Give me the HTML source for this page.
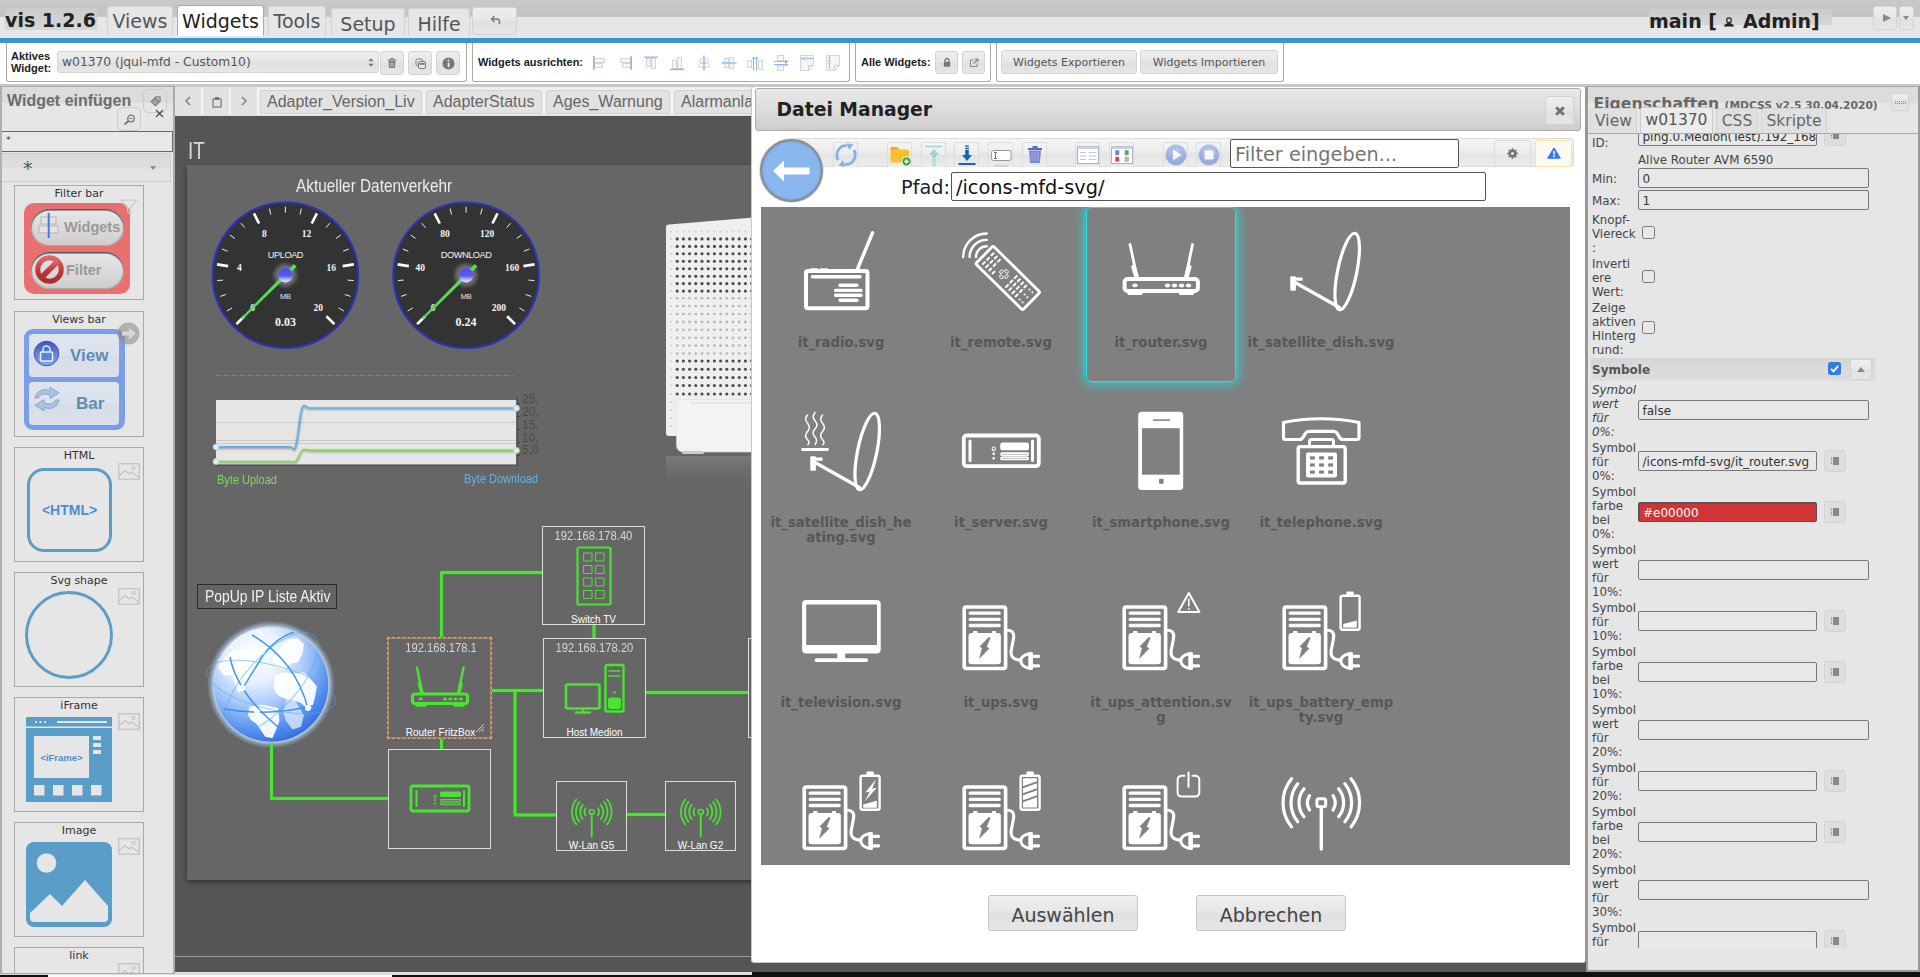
<!DOCTYPE html>
<html lang="de">
<head>
<meta charset="utf-8">
<title>vis 1.2.6</title>
<style>
*{box-sizing:border-box;margin:0;padding:0}
html,body{width:1920px;height:977px;overflow:hidden;background:#fff;font-family:"DejaVu Sans","Liberation Sans",sans-serif;color:#333}
.abs{position:absolute}
#hdr{position:absolute;left:0;top:0;width:1920px;height:38px;background:linear-gradient(#c9c9c9 0,#c3c3c3 15.500px,#a9a9a9 16px,#e6e6e6 17px,#e6e6e6 38px)}
#blue{position:absolute;left:0;top:38px;width:1920px;height:5px;background:#3a93d3}
.tab{position:absolute;border:1px solid #d3d3d3;border-bottom:none;background:#e6e6e6;border-radius:3px 3px 0 0;font-size:19px;color:#555;text-align:center;white-space:nowrap}
.tab.act{background:#fff;color:#212121;border-color:#aaa}
#tool{position:absolute;left:0;top:43px;width:1920px;height:41px;background:#fff}
.grp{position:absolute;top:0;height:39px;border:1px solid #aaa;border-top:none;border-radius:0 0 3px 3px;background:#fff}
.lbl{position:absolute;font-family:"Liberation Sans",sans-serif;font-weight:bold;font-size:11px;color:#222;line-height:12px;white-space:nowrap}
.btn{position:absolute;border:1px solid #d3d3d3;border-radius:3px;background:linear-gradient(#eee 0,#e6e6e6 50%,#e0e0e0 51%,#e6e6e6 100%);color:#555}
.tb{font-size:11px;line-height:23.500px;text-align:center;color:#555;white-space:nowrap}
#sep{position:absolute;left:0;top:84px;width:1920px;height:3px;background:#c8c8c8}




#bot{position:absolute;left:0;top:972px;width:1920px;height:5px;background:#111}

#left{position:absolute;left:0;top:86px;width:175px;height:888px;background:#e6e6e6;border-left:2px solid #b0b0b0;border-right:2px solid #ababab;border-top:1px solid #aaa;border-bottom:1px solid #aaa;overflow:hidden}
#left>*{position:absolute}
#ltitle{left:5px;top:4px;font-family:"Liberation Sans",sans-serif;font-weight:bold;font-size:16px;line-height:20px;color:#6c6c6c;white-space:nowrap}
#lband{left:0;top:0;width:171px;height:16px;background:#dcdcdc}
.lb{width:24px;height:24px;border:1px solid #ccc;border-radius:5px}
#lsearch{left:-1px;top:44px;width:172px;height:21px;border:1px solid #666;background:#e8e8e8;font-size:9.500px;line-height:15px;padding-left:4px;color:#333}
#lsel{left:-1px;top:66px;width:170px;height:29px;border:1px solid #d0d0d0;background:linear-gradient(#dadada 0,#dedede 50%,#e2e2e2 51%,#e5e5e5 100%)}
#lsel span{position:absolute;left:21px;top:0;font-size:19px;line-height:28px;color:#555}
#lsel i{position:absolute;left:148px;top:12px;border-top:4.500px solid #888;border-left:3.800px solid transparent;border-right:3.800px solid transparent}
#ltiles{left:-2px;top:-87px;width:174px;height:1000px}
.wt{position:absolute;left:14px;width:130px;border:1px solid #a8a8a8;background:#e6e6e6}
.wtt{position:absolute;left:0;top:0;width:128px;text-align:center;font-size:11px;line-height:15px;color:#333;white-space:nowrap}
.iph{position:absolute;left:103px;top:15px}
.pill{position:absolute;left:16px;width:93px;height:37px;border-radius:18.500px;background:linear-gradient(#e8e8e8,#cdcdcd);box-shadow:inset 0 1.500px 1px #555,inset 0 0 1px 1px #aaa;overflow:hidden}
.pill span{position:absolute;top:0;line-height:37px;font-family:"Liberation Sans",sans-serif;font-weight:bold;font-size:14.500px;color:#999}
.vbtn{position:absolute;left:14px;width:90px;height:43px;border-radius:4px;background:linear-gradient(#dfe5ee 0,#dce2eb 50%,#d6dde8 51%,#dce2eb 100%)}
.vbtn span{position:absolute;top:0;line-height:43px;font-family:"Liberation Sans",sans-serif;font-weight:bold;font-size:17px;color:#5d8db3}

#mid{position:absolute;left:175px;top:87px;width:1411px;height:885px;background:#555;overflow:hidden}
#vtabs{position:absolute;left:0;top:0;width:1411px;height:29px;background:#efefef;border-bottom:1px solid #ddd}
.vb{position:absolute;top:0;width:27px;height:28px;background:#e2e2e2;border-right:1px solid #f4f4f4}
.vb svg{position:absolute;left:9px;top:9px}
.vt{position:absolute;top:3px;height:24px;border:1px solid #d0d0d0;border-radius:2px;background:#e2e2e2;font-family:"Liberation Sans",sans-serif;font-size:16px;line-height:22px;padding-left:6px;color:#666;white-space:nowrap;overflow:hidden}
#cv{position:absolute;left:0;top:29px;width:576px;height:858px;overflow:hidden}
#cv>*{position:absolute}
.cn{position:absolute;white-space:nowrap;font-family:"Liberation Sans",sans-serif}
.cn span{display:inline-block;transform:scaleX(.84);transform-origin:0 50%}
#cvt{left:13.200px;top:21px;font-family:"Liberation Sans",sans-serif;font-size:23.500px;line-height:28px;color:#ddd;font-weight:normal}
#cvt span{display:inline-block;transform:scaleX(.8);transform-origin:0 50%}
#cvp{left:12px;top:49px;width:600px;height:715px;background:#666;box-shadow:0 2px 5px rgba(0,0,0,.45)}
#popup{left:22px;top:468px;width:140px;height:25px;border:1px solid #2a2a2a;background:#646464}
.nb{position:absolute;border:1px solid #ddd;background:#666}
.nb.selb{border:1px dashed #f5a55a;outline:1px solid rgba(245,165,90,.5);outline-offset:-2px;padding:1px}
.nb.selb>*{margin:1px}
.ip{position:absolute;left:0;top:1px;width:100%;text-align:center;font-family:"Liberation Sans",sans-serif;font-size:12.500px;line-height:16px;color:#d8d8d8;white-space:nowrap}
.ip span{display:inline-block;transform:scaleX(.895)}
.nm{position:absolute;left:0;bottom:-1.500px;width:100%;text-align:center;font-family:"Liberation Sans",sans-serif;font-size:10px;line-height:12px;color:#fff;white-space:nowrap}
#cvline{left:0;top:840px;width:577px;height:1px;background:#999}

#right{position:absolute;left:0;top:0;width:1920px;height:977px;background:none;overflow:visible}
#rbg{position:absolute;left:1586px;top:86px;width:334px;height:886px;background:#e6e6e6;border:2px solid #999;border-top:1px solid #aaa}
#rtitle{position:absolute;left:1593.500px;top:94px;white-space:nowrap;color:#686868;font-size:10.700px;line-height:20px}
#rtitle b{font-size:15.700px}
#rtitle span{font-weight:bold;position:relative;left:2px;top:0}
#rband{position:absolute;left:1588px;top:87px;width:330px;height:16px;background:#dcdcdc}
.rtab{position:absolute;top:108px;height:25px;border:1px solid #d3d3d3;border-bottom:none;border-radius:3px 3px 0 0;background:#e0e0e0;font-size:15.500px;line-height:24px;text-align:center;color:#666;white-space:nowrap}
.rtab.act{background:#ebebeb;color:#555;border-color:#ccc}
#rline{position:absolute;left:1588px;top:133px;width:330px;height:1px;background:#aaa}
#rscroll{position:absolute;left:0;top:134px;width:1920px;height:814px;overflow:hidden}
#rscroll>*{position:absolute;margin-top:-134px}
.pl{left:1592px;width:48px;margin-top:-133px!important;font-size:11.850px;line-height:14px;color:#444;white-space:nowrap}
.pi{left:1638px;height:20px;border:1px solid #777;border-radius:2px;background:#e8e8e8;font-size:12px;line-height:20px;padding-left:3.500px;color:#333;white-space:nowrap;overflow:hidden}
.psb{left:1824px;width:22px;height:22px;background:#dedede}
.psb svg{position:absolute;left:5px;top:5px}
.pcb{left:1642px;width:13px;height:13px;border:1px solid #767676;border-radius:2.500px;background:#e8e8e8}
#symh{left:1591px;top:358px;width:284px;height:23px;background:linear-gradient(#d6d6d6,#dedede)}
#symh b{position:absolute;left:1px;top:1px;line-height:23px;font-size:12px;color:#555}
.pcbb{position:absolute;left:237px;top:4px;width:13px;height:13px;border-radius:2.500px;background:#2f7de1}
.pcbb svg{position:absolute;left:0;top:0}

#dlg{position:absolute;left:0;top:0;width:1920px;height:977px;pointer-events:none}
#dlg>*{position:absolute}
#dbox{position:absolute;left:751px;top:86px;width:835px;height:877px;background:#fff;border:1px solid #c8c8c8;border-right-color:#999;border-radius:3px}
#dtitle{left:755px;top:88px;width:826px;height:43px;border:1px solid #aaa;border-radius:3px;background:linear-gradient(#e9e9e9 0,#e0e0e0 35%,#cecece 100%)}
#dtitle span{position:absolute;left:20.500px;top:0;line-height:42.500px;font-weight:bold;font-size:18.750px;color:#222;white-space:nowrap}
#dclose{left:1544px;top:95px;width:29px;height:29px}
#dclose{left:789px;top:7px}
#dclose svg{position:absolute;left:7.500px;top:8px}
#dtool{left:790px;top:138px;width:784px;height:29px;border:1px solid #ddd;border-radius:3px;background:linear-gradient(#f4f4f4 0,#ececec 50%,#e4e4e4 52%,#ececec 100%)}
.fbtn{top:142px;height:25px;border:1px solid #ddd;border-bottom:none;border-radius:3px 3px 0 0;background:linear-gradient(#f4f4f4 0,#ececec 50%,#e4e4e4 52%,#ececec 100%);overflow:hidden}
.fbtn svg{position:absolute;left:0;top:0}
#back{left:760px;top:139px;width:63px;height:63px;border-radius:50%;background:#8ab6ee;border:2px solid #8c8c8c;box-shadow:0 0 0 1px #e0e0e0,inset 0 0 2px 0 #4f82d4}
#back svg{position:absolute;left:10px;top:18px}
#filter{left:1230px;top:139px;width:229px;height:29px;border:1px solid #555;border-radius:2px;background:#fff;font-size:19.300px;line-height:29px;padding-left:4px;color:#757575;white-space:nowrap;overflow:hidden}
#pfl{left:901px;top:173px;font-size:19.300px;line-height:29px;color:#222}
#pfad{left:951px;top:172px;width:535px;height:29px;border:1px solid #555;border-radius:2px;background:#fff;font-size:19.300px;line-height:29px;padding-left:4px;color:#111;white-space:nowrap}
#files{left:761px;top:207px;width:809px;height:658px;background:#808080;overflow:hidden}
.tile{position:absolute;width:150px;height:174px;border:1px solid transparent;border-radius:5px}
.tile.sel{border-color:#19e6e6;box-shadow:0 0 12px 1px #22dede;margin-top:-1px;height:175px}
.tile.sel .ico{top:22px}
.tile.sel .fn{top:127px}
.ico{position:absolute;left:34px;top:21px;overflow:visible}
.fn{position:absolute;left:-3px;top:126px;width:154px;text-align:center;font-weight:bold;font-size:13.200px;line-height:15px;color:#575757;white-space:nowrap}
.dbt{top:895px;width:150px;height:36px;font-size:19px;line-height:38.500px;text-align:center;color:#444;border-color:#c5c5c5}
</style>
</head>
<body>
<div id="hdr">
<div class="abs" style="left:5px;top:8px;width:92px;height:22px;background:linear-gradient(#cbcbcb,#d6d6d6)"></div>
<div class="abs" id="vis" style="left:5px;top:6px;font-weight:bold;font-size:19px;line-height:28px;color:#222;white-space:nowrap">vis 1.2.6</div>
<div class="tab" style="left:107px;top:6px;width:66px;height:30px;line-height:28px">Views</div>
<div class="tab act" style="left:177px;top:5px;width:87px;height:31px;line-height:30px;border-bottom:1px solid #fff">Widgets</div>
<div class="tab" style="left:268px;top:6px;width:58px;height:30px;line-height:28px">Tools</div>
<div class="tab" style="left:331px;top:8px;width:74px;height:28px;line-height:30px">Setup</div>
<div class="tab" style="left:408px;top:8px;width:62px;height:28px;line-height:30px">Hilfe</div>
<div class="btn" style="left:472px;top:7px;width:45px;height:28px"><svg class="abs" style="left:17px;top:7px" width="11" height="11" viewBox="0 0 11 11"><path d="M4.5 1 L1.5 4 L4.5 7 M1.5 4 H7 Q9.5 4 9.5 7 V9" fill="none" stroke="#777" stroke-width="1.4"/></svg></div>
<div class="abs" style="left:1649px;top:9px;width:183px;height:16px;background:linear-gradient(#cbcbcb,#d6d6d6)"></div>
<div class="abs" id="main" style="left:1649px;top:7px;font-weight:bold;font-size:19px;line-height:28px;color:#222;white-space:nowrap">main [<svg width="12" height="12" viewBox="0 0 12 12" style="margin:0 8px 0 6px;vertical-align:0px"><circle cx="6" cy="4.2" r="2.3" fill="none" stroke="#222" stroke-width="1.1"/><path d="M0.8 10.5 Q2 7 6 7 Q10 7 11.2 10.5 Z" fill="#222"/></svg>Admin]</div>
<div class="btn" style="left:1873px;top:6px;width:24px;height:24px"><div class="abs" style="left:9px;top:7px;border-left:8px solid #888;border-top:4.5px solid transparent;border-bottom:4.5px solid transparent"></div></div>
<div class="btn" style="left:1899px;top:6px;width:15px;height:24px"><div class="abs" style="left:3px;top:9px;border-top:4px solid #888;border-left:3.5px solid transparent;border-right:3.5px solid transparent"></div></div>
</div>
<div id="blue"></div>
<div id="tool">
<div class="grp" style="left:6px;width:461px">
<div class="lbl" style="left:4px;top:7px">Aktives<br>Widget:</div>
<div class="btn" style="left:49.500px;top:8px;width:322px;height:22px;font-size:12.300px;line-height:21px;padding-left:4.500px;color:#555;white-space:nowrap">w01370 (jqui-mfd - Custom10)<svg class="abs" style="left:309px;top:5px" width="8" height="11" viewBox="0 0 8 11"><path d="M1.300 4.300L4 1.300L6.700 4.300zM1.300 6.700L4 9.700L6.700 6.700z" fill="#777"/></svg></div>
<div class="btn" style="left:372.500px;top:8px;width:24px;height:24px"><svg class="abs" style="left:5px;top:5px" width="12" height="12" viewBox="0 0 12 12"><path d="M1.500 3h9M4.500 3v-1.300h3v1.300" stroke="#777" stroke-width="1.100" fill="none"/><path d="M2.500 4h7l-.7 7h-5.600z" fill="#777"/><path d="M4.700 5.200v4.600M6 5.200v4.600M7.300 5.200v4.600" stroke="#e6e6e6" stroke-width=".6"/></svg></div>
<div class="btn" style="left:400.500px;top:8px;width:24px;height:24px"><svg class="abs" style="left:5px;top:5px" width="13" height="13" viewBox="0 0 13 13"><rect x="2" y="2" width="6.500" height="6.500" rx="1.500" fill="none" stroke="#777" stroke-width="1"/><rect x="4.500" y="4.500" width="7" height="7" rx="1.500" fill="#e8e8e8" stroke="#777" stroke-width="1"/><rect x="5.500" y="6" width="5" height="1.800" fill="#777"/></svg></div>
<div class="btn" style="left:428.500px;top:8px;width:24px;height:24px"><svg class="abs" style="left:5px;top:4.500px" width="13" height="13" viewBox="0 0 13 13"><circle cx="6.500" cy="6.500" r="6" fill="#777"/><rect x="5.700" y="5.600" width="1.700" height="4.500" fill="#eee"/><circle cx="6.500" cy="3.600" r="1" fill="#eee"/></svg></div>
</div>
<div class="grp" style="left:472px;width:378px">
<div class="lbl" style="left:5px;top:13px">Widgets ausrichten:</div>
<div class="abs" style="left:118px;top:11px;width:18px;height:18px"><svg width="18" height="18" viewBox="0 0 18 18" opacity="0.55"><rect x="3.5" y="4.5" width="10" height="4" fill="#eee" stroke="#b4b4b4" stroke-width="1"/><rect x="3.5" y="9.5" width="8" height="4" fill="#eee" stroke="#b4b4b4" stroke-width="1"/><rect x="2" y="2" width="1.6" height="14" fill="#3b7de0"/></svg></div><div class="abs" style="left:143px;top:11px;width:18px;height:18px"><svg width="18" height="18" viewBox="0 0 18 18" opacity="0.55"><rect x="4.5" y="4.5" width="10" height="4" fill="#eee" stroke="#b4b4b4" stroke-width="1"/><rect x="6.5" y="9.5" width="8" height="4" fill="#eee" stroke="#b4b4b4" stroke-width="1"/><rect x="14.4" y="2" width="1.6" height="14" fill="#3b7de0"/></svg></div><div class="abs" style="left:169px;top:11px;width:18px;height:18px"><svg width="18" height="18" viewBox="0 0 18 18" opacity="0.55"><rect x="4.5" y="4.5" width="4" height="8" fill="#eee" stroke="#b4b4b4" stroke-width="1"/><rect x="9.500" y="4.5" width="4" height="10" fill="#eee" stroke="#b4b4b4" stroke-width="1"/><rect x="2" y="2.5" width="14" height="1.4" fill="#3b7de0"/></svg></div><div class="abs" style="left:195px;top:11px;width:18px;height:18px"><svg width="18" height="18" viewBox="0 0 18 18" opacity="0.55"><rect x="4.5" y="6.5" width="4" height="8" fill="#eee" stroke="#b4b4b4" stroke-width="1"/><rect x="9.5" y="3.5" width="4" height="11" fill="#eee" stroke="#b4b4b4" stroke-width="1"/><rect x="2" y="14.6" width="14" height="1.6" fill="#3b7de0"/></svg></div><div class="abs" style="left:221.5px;top:11px;width:18px;height:18px"><svg width="18" height="18" viewBox="0 0 18 18" opacity="0.55"><rect x="4.500" y="4.500" width="9" height="4" rx="2" fill="#eee" stroke="#b4b4b4" stroke-width="1"/><rect x="3.5" y="9.5" width="11" height="4" rx="2" fill="#eee" stroke="#b4b4b4" stroke-width="1"/><rect x="8.3" y="1.5" width="1.4" height="15" fill="#3b7de0"/></svg></div><div class="abs" style="left:247px;top:11px;width:18px;height:18px"><svg width="18" height="18" viewBox="0 0 18 18" opacity="0.55"><rect x="4.5" y="4.5" width="4" height="9" fill="#eee" stroke="#b4b4b4" stroke-width="1"/><rect x="9.5" y="3.500" width="4" height="11" fill="#eee" stroke="#b4b4b4" stroke-width="1"/><rect x="1.5" y="8.3" width="15" height="1.4" fill="#3b7de0"/></svg></div><div class="abs" style="left:273px;top:11px;width:18px;height:18px"><svg width="18" height="18" viewBox="0 0 18 18" opacity="0.55"><rect x="1.5" y="6.5" width="4" height="7" fill="#eee" stroke="#b4b4b4" stroke-width="1"/><rect x="12.5" y="6.5" width="4" height="9" fill="#eee" stroke="#b4b4b4" stroke-width="1"/><path d="M7.5 3v13.500M10.5 3v13.500M6 4.500h3M9 4.500h3" stroke="#3b7de0" stroke-width="1.1" fill="none"/></svg></div><div class="abs" style="left:299px;top:11px;width:18px;height:18px"><svg width="18" height="18" viewBox="0 0 18 18" opacity="0.55"><rect x="5.500" y="1.500" width="6" height="5" fill="#eee" stroke="#b4b4b4" stroke-width="1"/><rect x="5.500" y="11.500" width="6" height="5" fill="#eee" stroke="#b4b4b4" stroke-width="1"/><path d="M2 7.500h13M2 10.500h13M13 6l2.500 1.500l-2.500 1.500M13 9l2.500 1.500l-2.500 1.500" stroke="#3b7de0" stroke-width="1.2" fill="none"/></svg></div><div class="abs" style="left:325px;top:11px;width:18px;height:18px"><svg width="18" height="18" viewBox="0 0 18 18" opacity="0.55"><path d="M2.500 1.500h13v10l-5 5h-8z" fill="#eee" stroke="#b4b4b4" stroke-width="1"/><path d="M10.500 16.500v-5h5" fill="none" stroke="#aaa"/><path d="M4 4.500h10M4 3.500v2M14 3.500v2" stroke="#3b7de0" stroke-width="1" fill="none"/><rect x="7.500" y="3.500" width="2" height="2" fill="#fff" stroke="#888" stroke-width=".6"/></svg></div><div class="abs" style="left:351px;top:11px;width:18px;height:18px"><svg width="18" height="18" viewBox="0 0 18 18" opacity="0.55"><path d="M2.500 1.500h13v10l-5 5h-8z" fill="#eee" stroke="#b4b4b4" stroke-width="1"/><path d="M10.500 16.500v-5h5" fill="none" stroke="#aaa"/><path d="M5.500 3v11M4.500 3h2M4.500 14h2" stroke="#3b7de0" stroke-width="1" fill="none"/><rect x="4.500" y="7.500" width="2" height="2" fill="#fff" stroke="#888" stroke-width=".6"/></svg></div>
</div>
<div class="grp" style="left:855px;width:136px">
<div class="lbl" style="left:5px;top:13px">Alle Widgets:</div>
<div class="btn" style="left:79px;top:8px;width:23px;height:23px"><svg class="abs" style="left:6px;top:5px" width="10" height="11" viewBox="0 0 10 11"><path d="M3 5V3.500a2 2 0 0 1 4 0V5" fill="none" stroke="#777" stroke-width="1.300"/><rect x="1.800" y="4.800" width="6.400" height="5" rx="1" fill="#777"/></svg></div>
<div class="btn" style="left:106px;top:8px;width:23px;height:23px"><svg class="abs" style="left:6px;top:6px" width="10" height="10" viewBox="0 0 10 10"><path d="M4.500 2H1.500v6.500H8V5.500" fill="none" stroke="#888" stroke-width="1"/><path d="M5.500 1H9v3.500M9 1L4.500 5.500" fill="none" stroke="#888" stroke-width="1.100"/></svg></div>
</div>
<div class="grp" style="left:996px;width:288px">
<div class="btn tb" style="left:4px;top:7px;width:136px;height:24px">Widgets Exportieren</div>
<div class="btn tb" style="left:143px;top:7px;width:138px;height:24px">Widgets Importieren</div>
</div>
</div>

<div id="sep"></div>


<div id="rbg"></div>

<div id="bot"><div class="abs" style="left:0;top:0;width:752px;height:3px;background:#dcdcdc"></div><div class="abs" style="left:0;top:3px;width:752px;height:2px;background:#111"></div><div class="abs" style="left:48px;top:3px;width:344px;height:2px;background:#f8f8f8"></div></div>

<div id="left">
<div id="lband"></div>
<div id="ltitle">Widget einfügen</div>
<div class="lb" style="left:141px;top:2px"><svg class="abs" style="left:5px;top:5px" width="13" height="13" viewBox="0 0 13 13"><path d="M6.500 1.200H11.800V6.500L6.500 11.800L1.200 6.500Z" fill="#8a8a8a"/><circle cx="9.300" cy="3.700" r="1" fill="#e6e6e6"/><path d="M4 6.500L6.500 9M5.500 5L8 7.500" stroke="#e6e6e6" stroke-width=".8"/></svg></div>
<div class="lb" style="left:115px;top:20px"><svg class="abs" style="left:5px;top:6px" width="13" height="12" viewBox="0 0 13 12"><circle cx="8" cy="4.500" r="3.300" fill="none" stroke="#777" stroke-width="1.300"/><path d="M6.300 4.500h3.400" stroke="#777" stroke-width="1"/><path d="M5.500 7L1.500 10.500" stroke="#777" stroke-width="2"/></svg></div>
<svg class="abs" style="left:153px;top:22px" width="9" height="9" viewBox="0 0 9 9"><path d="M1 1L8 8M8 1L1 8" stroke="#444" stroke-width="1.100"/></svg>
<div id="lsearch">*</div>
<div id="lsel"><span>*</span><i></i></div>
<div id="ltiles"><div class="wt" style="top:185px;height:115px"><div class="wtt">Filter bar</div><div class="abs" style="left:9px;top:17px;width:106px;height:91px;border-radius:10px;background:#e87070"></div><div class="pill" style="top:23px"><svg class="abs" style="left:7px;top:3px" width="22" height="28" viewBox="0 0 22 28"><rect x="3" y="5" width="15" height="7" fill="#e4e4e4" stroke="#b5b5b5"/><rect x="1" y="14" width="19" height="7" fill="#e4e4e4" stroke="#b5b5b5"/><rect x="9.700" y="1" width="2" height="25" fill="#3b7de0"/></svg><span style="left:33px">Widgets</span></div><div class="pill" style="top:66px"><svg class="abs" style="left:3px;top:2px" width="31" height="31" viewBox="0 0 31 31"><defs><linearGradient id="ng" x1="0" y1="0" x2="0" y2="1"><stop offset="0" stop-color="#d96a6a"/><stop offset=".5" stop-color="#c43a3a"/><stop offset="1" stop-color="#a83030"/></linearGradient></defs><circle cx="15.500" cy="15.500" r="11.800" fill="none" stroke="url(#ng)" stroke-width="5"/><path d="M7.500 23.500L23.500 7.500" stroke="url(#ng)" stroke-width="5.500"/></svg><span style="left:35px">Filter</span></div><svg class="abs" style="left:105px;top:13px" width="18" height="17" viewBox="0 0 18 17"><path d="M1 1.200H16.500L10.500 8.500V15L7.500 13V8.500Z" fill="none" stroke="#ccc" stroke-width="1.200"/></svg></div>
<div class="wt" style="top:311px;height:126px"><div class="wtt">Views bar</div><div class="abs" style="left:9px;top:17px;width:101px;height:101px;border-radius:9px;background:#7b9fe6"></div><div class="vbtn" style="top:22px"><svg class="abs" style="left:4px;top:6px" width="27" height="27" viewBox="0 0 27 27"><defs><linearGradient id="lg1" x1="0" y1="0" x2="0" y2="1"><stop offset="0" stop-color="#3b57c4"/><stop offset="1" stop-color="#86abf0"/></linearGradient></defs><circle cx="13.500" cy="13.500" r="12.300" fill="url(#lg1)" stroke="#4a50b0" stroke-width="1"/><rect x="7.500" y="12" width="12" height="9" rx="1" fill="#5a84dc" stroke="#e8eefc" stroke-width="1.500"/><path d="M10 12V9.500a3.500 3.500 0 0 1 7 0V12" fill="none" stroke="#e8eefc" stroke-width="1.500"/></svg><span style="left:41px">View</span></div><div class="vbtn" style="top:70px"><svg class="abs" style="left:4px;top:3px" width="28" height="30" viewBox="0 0 28 30"><path d="M2 13C3 6 10 3 17 5.500V2L26 8L17 13.500V10C11 8 6 10 5.500 13ZM26 15C25 22 18 25 11 22.500V26L2 20L11 14.500V18C17 20 22 18 22.500 15Z" fill="#a9c3e0" stroke="#7d9dc4" stroke-width=".8"/></svg><span style="left:47px">Bar</span></div><svg class="abs" style="left:102px;top:10px" width="23" height="23" viewBox="0 0 23 23"><circle cx="11.500" cy="11.500" r="11" fill="rgba(140,140,140,.6)"/><path d="M5 9.500H12V5.500L19 11.500L12 17.500V13.500H5Z" fill="#d8d8d8"/></svg></div>
<div class="wt" style="top:447px;height:115px"><div class="wtt">HTML</div><svg class="iph" width="22" height="17" viewBox="0 0 22 17"><rect x=".750" y=".750" width="20.500" height="15.500" fill="none" stroke="#c4c4c4" stroke-width="1.300"/><path d="M.750 13L7 7.500L11 11L13.500 9L21.250 14.500" fill="none" stroke="#c4c4c4" stroke-width="1.300"/><circle cx="15.500" cy="5" r="1.500" fill="none" stroke="#c4c4c4" stroke-width="1.200"/></svg><div class="abs" style="left:12px;top:20px;width:85px;height:84px;border:3px solid #5b9dc9;border-radius:17px;text-align:center;line-height:78px;font-family:'Liberation Sans',sans-serif;font-weight:bold;font-size:14px;color:#4a8fd0">&lt;HTML&gt;</div></div>
<div class="wt" style="top:572px;height:115px"><div class="wtt">Svg shape</div><svg class="iph" width="22" height="17" viewBox="0 0 22 17"><rect x=".750" y=".750" width="20.500" height="15.500" fill="none" stroke="#c4c4c4" stroke-width="1.300"/><path d="M.750 13L7 7.500L11 11L13.500 9L21.250 14.500" fill="none" stroke="#c4c4c4" stroke-width="1.300"/><circle cx="15.500" cy="5" r="1.500" fill="none" stroke="#c4c4c4" stroke-width="1.200"/></svg><div class="abs" style="left:10px;top:18px;width:88px;height:88px;border:3.300px solid #5b9dc9;border-radius:50%"></div></div>
<div class="wt" style="top:697px;height:115px"><div class="wtt">iFrame</div><svg class="iph" width="22" height="17" viewBox="0 0 22 17"><rect x=".750" y=".750" width="20.500" height="15.500" fill="none" stroke="#c4c4c4" stroke-width="1.300"/><path d="M.750 13L7 7.500L11 11L13.500 9L21.250 14.500" fill="none" stroke="#c4c4c4" stroke-width="1.300"/><circle cx="15.500" cy="5" r="1.500" fill="none" stroke="#c4c4c4" stroke-width="1.200"/></svg><svg class="abs" style="left:11.300px;top:19.400px" width="86" height="85" viewBox="0 0 86 85"><rect width="86" height="85" fill="#5b9dc9"/><rect x="0" y="9.500" width="86" height="1.500" fill="#e6e6e6"/><path d="M9 5h2M13.500 5h2M18 5h2" stroke="#e6e6e6" stroke-width="1.800"/><rect x="31" y="4" width="50" height="2" fill="#e6e6e6"/><rect x="8" y="19" width="55" height="42" fill="#e6e6e6"/><rect x="67" y="19" width="8" height="4" fill="#e6e6e6"/><rect x="67" y="26" width="8" height="4" fill="#e6e6e6"/><rect x="67" y="33" width="8" height="4" fill="#e6e6e6"/><rect x="8" y="68" width="10.500" height="10.500" fill="#e6e6e6"/><rect x="27" y="68" width="10.500" height="10.500" fill="#e6e6e6"/><rect x="46" y="68" width="10.500" height="10.500" fill="#e6e6e6"/><rect x="65" y="68" width="10.500" height="10.500" fill="#e6e6e6"/><text x="35.500" y="43.500" text-anchor="middle" font-family="Liberation Sans,sans-serif" font-weight="bold" font-size="9.500" fill="#4a8fd0">&lt;iFrame&gt;</text></svg></div>
<div class="wt" style="top:822px;height:115px"><div class="wtt">Image</div><svg class="iph" width="22" height="17" viewBox="0 0 22 17"><rect x=".750" y=".750" width="20.500" height="15.500" fill="none" stroke="#c4c4c4" stroke-width="1.300"/><path d="M.750 13L7 7.500L11 11L13.500 9L21.250 14.500" fill="none" stroke="#c4c4c4" stroke-width="1.300"/><circle cx="15.500" cy="5" r="1.500" fill="none" stroke="#c4c4c4" stroke-width="1.200"/></svg><svg class="abs" style="left:11.300px;top:19.400px" width="86" height="85" viewBox="0 0 86 85"><rect width="86" height="85" rx="8" fill="#5b9dc9"/><circle cx="20.500" cy="21" r="9.800" fill="#e6e6e6"/><path d="M4 71L24 52L36 64L59 38L82 64V76a4 4 0 0 1 -4 4H8a4 4 0 0 1 -4 -4Z" fill="#e6e6e6"/></svg></div>
<div class="wt" style="top:947px;height:40px"><div class="wtt">link</div><svg class="iph" width="22" height="17" viewBox="0 0 22 17"><rect x=".750" y=".750" width="20.500" height="15.500" fill="none" stroke="#c4c4c4" stroke-width="1.300"/><path d="M.750 13L7 7.500L11 11L13.500 9L21.250 14.500" fill="none" stroke="#c4c4c4" stroke-width="1.300"/><circle cx="15.500" cy="5" r="1.500" fill="none" stroke="#c4c4c4" stroke-width="1.200"/></svg></div>
</div>
</div>
<div id="mid">
<div id="vtabs"><div class="vb" style="left:0"><svg width="8" height="10" viewBox="0 0 8 10"><path d="M6 1L2 5L6 9" fill="none" stroke="#777" stroke-width="1.300"/></svg></div><div class="vb" style="left:28px"><svg width="10" height="12" viewBox="0 0 10 12"><rect x="1" y="3" width="8" height="8" fill="none" stroke="#777" stroke-width="1.200"/><rect x="3" y="1" width="4" height="3" fill="#777"/></svg></div><div class="vb" style="left:56px"><svg width="8" height="10" viewBox="0 0 8 10"><path d="M2 1L6 5L2 9" fill="none" stroke="#777" stroke-width="1.300"/></svg></div><div class="vt" style="left:85px;width:162px">Adapter_Version_Liv</div><div class="vt" style="left:251px;width:116px">AdapterStatus</div><div class="vt" style="left:371px;width:124px">Ages_Warnung</div><div class="vt" style="left:499px;width:120px">Alarmanlage</div></div>
<div id="cv">
<div id="cvt"><span>IT</span></div>
<div id="cvp"></div>
<div class="cn" style="left:121px;top:59px;font-size:18.300px;color:#ececec"><span>Aktueller Datenverkehr</span></div>
<svg class="abs" style="left:-175px;top:-116px" width="760" height="600" viewBox="0 0 760 600"><defs><linearGradient id="hub" x1="0" y1="0" x2="0" y2="1"><stop offset="0" stop-color="#4d4de6"/><stop offset=".55" stop-color="#5a5af0"/><stop offset=".8" stop-color="#b9b9ff"/><stop offset="1" stop-color="#f0f0ff"/></linearGradient><radialGradient id="hubglow"><stop offset=".4" stop-color="#d8c8d0" stop-opacity=".55"/><stop offset="1" stop-color="#d8c8d0" stop-opacity="0"/></radialGradient></defs><g transform="translate(285.4 275.2)"><circle r="72.8" fill="#333" stroke="#2c32bc" stroke-width="2"/><line x1="-41.01" y1="41.01" x2="-49.00" y2="49.00" stroke="#fff" stroke-width="2.600"/><line x1="-53.29" y1="32.66" x2="-58.41" y2="35.79" stroke="#eee" stroke-width="1"/><line x1="-59.44" y1="19.31" x2="-65.15" y2="21.17" stroke="#eee" stroke-width="1"/><line x1="-62.31" y1="4.90" x2="-68.29" y2="5.37" stroke="#eee" stroke-width="1"/><line x1="-57.29" y1="-9.07" x2="-68.45" y2="-10.84" stroke="#fff" stroke-width="2.600"/><line x1="-57.74" y1="-23.92" x2="-63.29" y2="-26.21" stroke="#eee" stroke-width="1"/><line x1="-50.56" y1="-36.74" x2="-55.42" y2="-40.26" stroke="#eee" stroke-width="1"/><line x1="-40.59" y1="-47.53" x2="-44.49" y2="-52.09" stroke="#eee" stroke-width="1"/><line x1="-26.33" y1="-51.68" x2="-31.46" y2="-61.75" stroke="#fff" stroke-width="2.600"/><line x1="-14.59" y1="-60.77" x2="-15.99" y2="-66.61" stroke="#eee" stroke-width="1"/><line x1="-0.00" y1="-62.50" x2="-0.00" y2="-68.50" stroke="#eee" stroke-width="1"/><line x1="14.59" y1="-60.77" x2="15.99" y2="-66.61" stroke="#eee" stroke-width="1"/><line x1="26.33" y1="-51.68" x2="31.46" y2="-61.75" stroke="#fff" stroke-width="2.600"/><line x1="40.59" y1="-47.53" x2="44.49" y2="-52.09" stroke="#eee" stroke-width="1"/><line x1="50.56" y1="-36.74" x2="55.42" y2="-40.26" stroke="#eee" stroke-width="1"/><line x1="57.74" y1="-23.92" x2="63.29" y2="-26.21" stroke="#eee" stroke-width="1"/><line x1="57.29" y1="-9.07" x2="68.45" y2="-10.84" stroke="#fff" stroke-width="2.600"/><line x1="62.31" y1="4.90" x2="68.29" y2="5.37" stroke="#eee" stroke-width="1"/><line x1="59.44" y1="19.31" x2="65.15" y2="21.17" stroke="#eee" stroke-width="1"/><line x1="53.29" y1="32.66" x2="58.41" y2="35.79" stroke="#eee" stroke-width="1"/><line x1="41.01" y1="41.01" x2="49.00" y2="49.00" stroke="#fff" stroke-width="2.600"/><text x="-32.88" y="35.88" text-anchor="middle" font-family="Liberation Serif,serif" font-weight="bold" font-size="9.500" fill="#f4f4f4">0</text><text x="-45.93" y="-4.27" text-anchor="middle" font-family="Liberation Serif,serif" font-weight="bold" font-size="9.500" fill="#f4f4f4">4</text><text x="-21.11" y="-38.43" text-anchor="middle" font-family="Liberation Serif,serif" font-weight="bold" font-size="9.500" fill="#f4f4f4">8</text><text x="21.11" y="-38.43" text-anchor="middle" font-family="Liberation Serif,serif" font-weight="bold" font-size="9.500" fill="#f4f4f4">12</text><text x="45.93" y="-4.27" text-anchor="middle" font-family="Liberation Serif,serif" font-weight="bold" font-size="9.500" fill="#f4f4f4">16</text><text x="32.88" y="35.88" text-anchor="middle" font-family="Liberation Serif,serif" font-weight="bold" font-size="9.500" fill="#f4f4f4">20</text><text x="0" y="-17.500" text-anchor="middle" font-family="Liberation Sans,sans-serif" font-size="9.200" fill="#f4f4f4" letter-spacing="-.4">UPLOAD</text><text x="0" y="23.500" text-anchor="middle" font-family="Liberation Sans,sans-serif" font-size="7.500" fill="#e8e8e8" letter-spacing="-.3">MB</text><text x="0" y="51" text-anchor="middle" font-family="Liberation Serif,serif" font-weight="bold" font-size="12" fill="#f4f4f4">0.03</text><circle r="14" fill="url(#hubglow)"/><g transform="rotate(225)"><path d="M-2 14L-1 -62L1 -62L2 14Z" fill="#55dd55"/><path d="M-1 -62L-.8 -68.500L.8 -68.500L1 -62Z" fill="#fff"/></g><circle r="7.300" fill="url(#hub)"/></g><g transform="translate(466.1 275.2)"><circle r="72.8" fill="#333" stroke="#2c32bc" stroke-width="2"/><line x1="-41.01" y1="41.01" x2="-49.00" y2="49.00" stroke="#fff" stroke-width="2.600"/><line x1="-53.29" y1="32.66" x2="-58.41" y2="35.79" stroke="#eee" stroke-width="1"/><line x1="-59.44" y1="19.31" x2="-65.15" y2="21.17" stroke="#eee" stroke-width="1"/><line x1="-62.31" y1="4.90" x2="-68.29" y2="5.37" stroke="#eee" stroke-width="1"/><line x1="-57.29" y1="-9.07" x2="-68.45" y2="-10.84" stroke="#fff" stroke-width="2.600"/><line x1="-57.74" y1="-23.92" x2="-63.29" y2="-26.21" stroke="#eee" stroke-width="1"/><line x1="-50.56" y1="-36.74" x2="-55.42" y2="-40.26" stroke="#eee" stroke-width="1"/><line x1="-40.59" y1="-47.53" x2="-44.49" y2="-52.09" stroke="#eee" stroke-width="1"/><line x1="-26.33" y1="-51.68" x2="-31.46" y2="-61.75" stroke="#fff" stroke-width="2.600"/><line x1="-14.59" y1="-60.77" x2="-15.99" y2="-66.61" stroke="#eee" stroke-width="1"/><line x1="-0.00" y1="-62.50" x2="-0.00" y2="-68.50" stroke="#eee" stroke-width="1"/><line x1="14.59" y1="-60.77" x2="15.99" y2="-66.61" stroke="#eee" stroke-width="1"/><line x1="26.33" y1="-51.68" x2="31.46" y2="-61.75" stroke="#fff" stroke-width="2.600"/><line x1="40.59" y1="-47.53" x2="44.49" y2="-52.09" stroke="#eee" stroke-width="1"/><line x1="50.56" y1="-36.74" x2="55.42" y2="-40.26" stroke="#eee" stroke-width="1"/><line x1="57.74" y1="-23.92" x2="63.29" y2="-26.21" stroke="#eee" stroke-width="1"/><line x1="57.29" y1="-9.07" x2="68.45" y2="-10.84" stroke="#fff" stroke-width="2.600"/><line x1="62.31" y1="4.90" x2="68.29" y2="5.37" stroke="#eee" stroke-width="1"/><line x1="59.44" y1="19.31" x2="65.15" y2="21.17" stroke="#eee" stroke-width="1"/><line x1="53.29" y1="32.66" x2="58.41" y2="35.79" stroke="#eee" stroke-width="1"/><line x1="41.01" y1="41.01" x2="49.00" y2="49.00" stroke="#fff" stroke-width="2.600"/><text x="-32.88" y="35.88" text-anchor="middle" font-family="Liberation Serif,serif" font-weight="bold" font-size="9.500" fill="#f4f4f4">0</text><text x="-45.93" y="-4.27" text-anchor="middle" font-family="Liberation Serif,serif" font-weight="bold" font-size="9.500" fill="#f4f4f4">40</text><text x="-21.11" y="-38.43" text-anchor="middle" font-family="Liberation Serif,serif" font-weight="bold" font-size="9.500" fill="#f4f4f4">80</text><text x="21.11" y="-38.43" text-anchor="middle" font-family="Liberation Serif,serif" font-weight="bold" font-size="9.500" fill="#f4f4f4">120</text><text x="45.93" y="-4.27" text-anchor="middle" font-family="Liberation Serif,serif" font-weight="bold" font-size="9.500" fill="#f4f4f4">160</text><text x="32.88" y="35.88" text-anchor="middle" font-family="Liberation Serif,serif" font-weight="bold" font-size="9.500" fill="#f4f4f4">200</text><text x="0" y="-17.500" text-anchor="middle" font-family="Liberation Sans,sans-serif" font-size="9.200" fill="#f4f4f4" letter-spacing="-.4">DOWNLOAD</text><text x="0" y="23.500" text-anchor="middle" font-family="Liberation Sans,sans-serif" font-size="7.500" fill="#e8e8e8" letter-spacing="-.3">MB</text><text x="0" y="51" text-anchor="middle" font-family="Liberation Serif,serif" font-weight="bold" font-size="12" fill="#f4f4f4">0.24</text><circle r="14" fill="url(#hubglow)"/><g transform="rotate(225)"><path d="M-2 14L-1 -62L1 -62L2 14Z" fill="#55dd55"/><path d="M-1 -62L-.8 -68.500L.8 -68.500L1 -62Z" fill="#fff"/></g><circle r="7.300" fill="url(#hub)"/></g></svg>
<svg class="abs" style="left:-175px;top:-116px" width="760" height="600" viewBox="0 0 760 600"><path d="M216 375.500H513" stroke="#4fb8c8" stroke-width="1" stroke-dasharray="4 1.500 1 1.500" opacity=".6"/><rect x="216" y="400" width="300.500" height="65" fill="#e6e6e6"/><path d="M216 422.500H516M216 440.500H516M216 443.500H516" stroke="#cacaca" stroke-width="1"/><path d="M216 465H517V398" fill="none" stroke="#444" stroke-width="1.200"/><path d="M517 403.500h3M517 416.500h3M517 429.500h3M517 442.500h3M517 455.500h3" stroke="#444" stroke-width="1"/><g font-family="Liberation Sans,sans-serif" font-size="12" fill="#4c4c4c"><text x="522" y="402.600">25,</text><text x="522" y="416">20,</text><text x="522" y="428.800">15,</text><text x="522" y="441.600">10,</text><text x="522" y="454.300">5,0</text></g><path d="M216 447H290C293.500 447 294 451.500 295.500 448C299 436 300 410 303 406.500C305 404 306 408.200 309 408.200H516.500" fill="none" stroke="#6ab0de" stroke-width="1.800" style="filter:drop-shadow(0 1.500px 1px rgba(0,0,0,.35))"/><path d="M216 461.600H290C293 461.600 294 463.200 296 461.500C299.500 458 300.500 449.500 304 449.300C306.500 449.200 307 450.400 309.500 450.400H516.500" fill="none" stroke="#7ed957" stroke-width="1.600" style="filter:drop-shadow(0 1.500px 1px rgba(0,0,0,.35))"/><g fill="#e6e9f0" stroke-width=".8"><circle cx="216" cy="447" r="2.900" stroke="#a8cdea"/><circle cx="516.500" cy="408.200" r="2.900" stroke="#a8cdea"/><circle cx="216" cy="461.500" r="2.900" stroke="#b4e49c"/><circle cx="516.500" cy="450.400" r="2.900" stroke="#b4e49c"/></g></svg>
<div class="cn" style="left:42px;top:356px;font-size:13.100px;color:#7ed957"><span>Byte Upload</span></div>
<div class="cn" style="left:289px;top:355px;font-size:13.100px;color:#6ab0de"><span>Byte Download</span></div>
<svg class="abs" style="left:-175px;top:-116px" width="760" height="600" viewBox="0 0 760 600"><defs><linearGradient id="refl" x1="0" y1="0" x2="0" y2="1"><stop offset="0" stop-color="#8a8a8a"/><stop offset="1" stop-color="#666" stop-opacity="0"/></linearGradient></defs><path d="M669 224.500L760 217V436H669Q666 436 666 433V227.500Q666 224.500 669 224.500Z" fill="#efefef"/><circle cx="671.0" cy="231.5" r="1.100" fill="#d0d0d0"/><circle cx="677.2" cy="231.5" r="1.100" fill="#d0d0d0"/><circle cx="683.4" cy="231.5" r="1.100" fill="#d0d0d0"/><circle cx="689.6" cy="231.5" r="1.100" fill="#d0d0d0"/><circle cx="695.8" cy="231.5" r="1.100" fill="#d0d0d0"/><circle cx="702.0" cy="231.5" r="1.100" fill="#d0d0d0"/><circle cx="708.2" cy="231.5" r="1.100" fill="#d0d0d0"/><circle cx="714.4" cy="231.5" r="1.100" fill="#d0d0d0"/><circle cx="720.6" cy="231.5" r="1.100" fill="#d0d0d0"/><circle cx="726.8" cy="231.5" r="1.100" fill="#d0d0d0"/><circle cx="733.0" cy="231.5" r="1.100" fill="#d0d0d0"/><circle cx="739.2" cy="231.5" r="1.100" fill="#d0d0d0"/><circle cx="745.4" cy="231.5" r="1.100" fill="#d0d0d0"/><circle cx="751.6" cy="231.5" r="1.100" fill="#d0d0d0"/><circle cx="671.0" cy="238.9" r="1.100" fill="#d0d0d0"/><circle cx="677.2" cy="238.9" r="1.550" fill="#4a4a4a"/><circle cx="683.4" cy="238.9" r="1.550" fill="#4a4a4a"/><circle cx="689.6" cy="238.9" r="1.550" fill="#4a4a4a"/><circle cx="695.8" cy="238.9" r="1.550" fill="#4a4a4a"/><circle cx="702.0" cy="238.9" r="1.550" fill="#4a4a4a"/><circle cx="708.2" cy="238.9" r="1.550" fill="#4a4a4a"/><circle cx="714.4" cy="238.9" r="1.550" fill="#4a4a4a"/><circle cx="720.6" cy="238.9" r="1.550" fill="#4a4a4a"/><circle cx="726.8" cy="238.9" r="1.550" fill="#4a4a4a"/><circle cx="733.0" cy="238.9" r="1.550" fill="#4a4a4a"/><circle cx="739.2" cy="238.9" r="1.550" fill="#4a4a4a"/><circle cx="745.4" cy="238.9" r="1.550" fill="#4a4a4a"/><circle cx="751.6" cy="238.9" r="1.550" fill="#4a4a4a"/><circle cx="671.0" cy="246.4" r="1.100" fill="#d0d0d0"/><circle cx="677.2" cy="246.4" r="1.550" fill="#4a4a4a"/><circle cx="683.4" cy="246.4" r="1.550" fill="#4a4a4a"/><circle cx="689.6" cy="246.4" r="1.550" fill="#4a4a4a"/><circle cx="695.8" cy="246.4" r="1.550" fill="#4a4a4a"/><circle cx="702.0" cy="246.4" r="1.550" fill="#4a4a4a"/><circle cx="708.2" cy="246.4" r="1.550" fill="#4a4a4a"/><circle cx="714.4" cy="246.4" r="1.550" fill="#4a4a4a"/><circle cx="720.6" cy="246.4" r="1.550" fill="#4a4a4a"/><circle cx="726.8" cy="246.4" r="1.550" fill="#4a4a4a"/><circle cx="733.0" cy="246.4" r="1.550" fill="#4a4a4a"/><circle cx="739.2" cy="246.4" r="1.550" fill="#4a4a4a"/><circle cx="745.4" cy="246.4" r="1.550" fill="#4a4a4a"/><circle cx="751.6" cy="246.4" r="1.550" fill="#4a4a4a"/><circle cx="671.0" cy="253.8" r="1.100" fill="#d0d0d0"/><circle cx="677.2" cy="253.8" r="1.550" fill="#4a4a4a"/><circle cx="683.4" cy="253.8" r="1.550" fill="#4a4a4a"/><circle cx="689.6" cy="253.8" r="1.550" fill="#4a4a4a"/><circle cx="695.8" cy="253.8" r="1.550" fill="#4a4a4a"/><circle cx="702.0" cy="253.8" r="1.550" fill="#4a4a4a"/><circle cx="708.2" cy="253.8" r="1.550" fill="#4a4a4a"/><circle cx="714.4" cy="253.8" r="1.550" fill="#4a4a4a"/><circle cx="720.6" cy="253.8" r="1.550" fill="#4a4a4a"/><circle cx="726.8" cy="253.8" r="1.550" fill="#4a4a4a"/><circle cx="733.0" cy="253.8" r="1.550" fill="#4a4a4a"/><circle cx="739.2" cy="253.8" r="1.550" fill="#4a4a4a"/><circle cx="745.4" cy="253.8" r="1.550" fill="#4a4a4a"/><circle cx="751.6" cy="253.8" r="1.550" fill="#4a4a4a"/><circle cx="671.0" cy="261.3" r="1.100" fill="#d0d0d0"/><circle cx="677.2" cy="261.3" r="1.550" fill="#4a4a4a"/><circle cx="683.4" cy="261.3" r="1.550" fill="#4a4a4a"/><circle cx="689.6" cy="261.3" r="1.550" fill="#4a4a4a"/><circle cx="695.8" cy="261.3" r="1.550" fill="#4a4a4a"/><circle cx="702.0" cy="261.3" r="1.550" fill="#4a4a4a"/><circle cx="708.2" cy="261.3" r="1.550" fill="#4a4a4a"/><circle cx="714.4" cy="261.3" r="1.550" fill="#4a4a4a"/><circle cx="720.6" cy="261.3" r="1.550" fill="#4a4a4a"/><circle cx="726.8" cy="261.3" r="1.550" fill="#4a4a4a"/><circle cx="733.0" cy="261.3" r="1.550" fill="#4a4a4a"/><circle cx="739.2" cy="261.3" r="1.550" fill="#4a4a4a"/><circle cx="745.4" cy="261.3" r="1.550" fill="#4a4a4a"/><circle cx="751.6" cy="261.3" r="1.550" fill="#4a4a4a"/><circle cx="671.0" cy="268.8" r="1.100" fill="#d0d0d0"/><circle cx="677.2" cy="268.8" r="1.550" fill="#4a4a4a"/><circle cx="683.4" cy="268.8" r="1.550" fill="#4a4a4a"/><circle cx="689.6" cy="268.8" r="1.550" fill="#4a4a4a"/><circle cx="695.8" cy="268.8" r="1.550" fill="#4a4a4a"/><circle cx="702.0" cy="268.8" r="1.550" fill="#4a4a4a"/><circle cx="708.2" cy="268.8" r="1.550" fill="#4a4a4a"/><circle cx="714.4" cy="268.8" r="1.550" fill="#4a4a4a"/><circle cx="720.6" cy="268.8" r="1.550" fill="#4a4a4a"/><circle cx="726.8" cy="268.8" r="1.550" fill="#4a4a4a"/><circle cx="733.0" cy="268.8" r="1.550" fill="#4a4a4a"/><circle cx="739.2" cy="268.8" r="1.550" fill="#4a4a4a"/><circle cx="745.4" cy="268.8" r="1.550" fill="#4a4a4a"/><circle cx="751.6" cy="268.8" r="1.550" fill="#4a4a4a"/><circle cx="671.0" cy="276.2" r="1.100" fill="#d0d0d0"/><circle cx="677.2" cy="276.2" r="1.550" fill="#4a4a4a"/><circle cx="683.4" cy="276.2" r="1.550" fill="#4a4a4a"/><circle cx="689.6" cy="276.2" r="1.550" fill="#4a4a4a"/><circle cx="695.8" cy="276.2" r="1.550" fill="#4a4a4a"/><circle cx="702.0" cy="276.2" r="1.550" fill="#4a4a4a"/><circle cx="708.2" cy="276.2" r="1.550" fill="#4a4a4a"/><circle cx="714.4" cy="276.2" r="1.550" fill="#4a4a4a"/><circle cx="720.6" cy="276.2" r="1.550" fill="#4a4a4a"/><circle cx="726.8" cy="276.2" r="1.550" fill="#4a4a4a"/><circle cx="733.0" cy="276.2" r="1.550" fill="#4a4a4a"/><circle cx="739.2" cy="276.2" r="1.550" fill="#4a4a4a"/><circle cx="745.4" cy="276.2" r="1.550" fill="#4a4a4a"/><circle cx="751.6" cy="276.2" r="1.550" fill="#4a4a4a"/><circle cx="671.0" cy="283.6" r="1.100" fill="#d0d0d0"/><circle cx="677.2" cy="283.6" r="1.550" fill="#4a4a4a"/><circle cx="683.4" cy="283.6" r="1.550" fill="#4a4a4a"/><circle cx="689.6" cy="283.6" r="1.550" fill="#4a4a4a"/><circle cx="695.8" cy="283.6" r="1.550" fill="#4a4a4a"/><circle cx="702.0" cy="283.6" r="1.550" fill="#4a4a4a"/><circle cx="708.2" cy="283.6" r="1.550" fill="#4a4a4a"/><circle cx="714.4" cy="283.6" r="1.550" fill="#4a4a4a"/><circle cx="720.6" cy="283.6" r="1.550" fill="#4a4a4a"/><circle cx="726.8" cy="283.6" r="1.550" fill="#4a4a4a"/><circle cx="733.0" cy="283.6" r="1.550" fill="#4a4a4a"/><circle cx="739.2" cy="283.6" r="1.550" fill="#4a4a4a"/><circle cx="745.4" cy="283.6" r="1.550" fill="#4a4a4a"/><circle cx="751.6" cy="283.6" r="1.550" fill="#4a4a4a"/><circle cx="671.0" cy="291.1" r="1.100" fill="#d0d0d0"/><circle cx="677.2" cy="291.1" r="1.550" fill="#4a4a4a"/><circle cx="683.4" cy="291.1" r="1.550" fill="#4a4a4a"/><circle cx="689.6" cy="291.1" r="1.550" fill="#4a4a4a"/><circle cx="695.8" cy="291.1" r="1.550" fill="#4a4a4a"/><circle cx="702.0" cy="291.1" r="1.550" fill="#4a4a4a"/><circle cx="708.2" cy="291.1" r="1.550" fill="#4a4a4a"/><circle cx="714.4" cy="291.1" r="1.550" fill="#4a4a4a"/><circle cx="720.6" cy="291.1" r="1.550" fill="#4a4a4a"/><circle cx="726.8" cy="291.1" r="1.550" fill="#4a4a4a"/><circle cx="733.0" cy="291.1" r="1.550" fill="#4a4a4a"/><circle cx="739.2" cy="291.1" r="1.550" fill="#4a4a4a"/><circle cx="745.4" cy="291.1" r="1.550" fill="#4a4a4a"/><circle cx="751.6" cy="291.1" r="1.550" fill="#4a4a4a"/><circle cx="671.0" cy="298.2" r="1.100" fill="#d0d0d0"/><circle cx="677.2" cy="298.2" r="1.300" fill="#b4b4b4"/><circle cx="683.4" cy="298.2" r="1.300" fill="#b4b4b4"/><circle cx="689.6" cy="298.2" r="1.300" fill="#b4b4b4"/><circle cx="695.8" cy="298.2" r="1.300" fill="#b4b4b4"/><circle cx="702.0" cy="298.2" r="1.300" fill="#b4b4b4"/><circle cx="708.2" cy="298.2" r="1.300" fill="#b4b4b4"/><circle cx="714.4" cy="298.2" r="1.300" fill="#b4b4b4"/><circle cx="720.6" cy="298.2" r="1.300" fill="#b4b4b4"/><circle cx="726.8" cy="298.2" r="1.300" fill="#b4b4b4"/><circle cx="733.0" cy="298.2" r="1.300" fill="#b4b4b4"/><circle cx="739.2" cy="298.2" r="1.300" fill="#b4b4b4"/><circle cx="745.4" cy="298.2" r="1.300" fill="#b4b4b4"/><circle cx="751.6" cy="298.2" r="1.300" fill="#b4b4b4"/><circle cx="671.0" cy="306.1" r="1.100" fill="#d0d0d0"/><circle cx="677.2" cy="306.1" r="1.300" fill="#b4b4b4"/><circle cx="683.4" cy="306.1" r="1.300" fill="#b4b4b4"/><circle cx="689.6" cy="306.1" r="1.300" fill="#b4b4b4"/><circle cx="695.8" cy="306.1" r="1.300" fill="#b4b4b4"/><circle cx="702.0" cy="306.1" r="1.300" fill="#b4b4b4"/><circle cx="708.2" cy="306.1" r="1.300" fill="#b4b4b4"/><circle cx="714.4" cy="306.1" r="1.300" fill="#b4b4b4"/><circle cx="720.6" cy="306.1" r="1.300" fill="#b4b4b4"/><circle cx="726.8" cy="306.1" r="1.300" fill="#b4b4b4"/><circle cx="733.0" cy="306.1" r="1.300" fill="#b4b4b4"/><circle cx="739.2" cy="306.1" r="1.300" fill="#b4b4b4"/><circle cx="745.4" cy="306.1" r="1.300" fill="#b4b4b4"/><circle cx="751.6" cy="306.1" r="1.300" fill="#b4b4b4"/><circle cx="671.0" cy="314.0" r="1.100" fill="#d0d0d0"/><circle cx="677.2" cy="314.0" r="1.300" fill="#b4b4b4"/><circle cx="683.4" cy="314.0" r="1.300" fill="#b4b4b4"/><circle cx="689.6" cy="314.0" r="1.300" fill="#b4b4b4"/><circle cx="695.8" cy="314.0" r="1.300" fill="#b4b4b4"/><circle cx="702.0" cy="314.0" r="1.300" fill="#b4b4b4"/><circle cx="708.2" cy="314.0" r="1.300" fill="#b4b4b4"/><circle cx="714.4" cy="314.0" r="1.300" fill="#b4b4b4"/><circle cx="720.6" cy="314.0" r="1.300" fill="#b4b4b4"/><circle cx="726.8" cy="314.0" r="1.300" fill="#b4b4b4"/><circle cx="733.0" cy="314.0" r="1.300" fill="#b4b4b4"/><circle cx="739.2" cy="314.0" r="1.300" fill="#b4b4b4"/><circle cx="745.4" cy="314.0" r="1.300" fill="#b4b4b4"/><circle cx="751.6" cy="314.0" r="1.300" fill="#b4b4b4"/><circle cx="671.0" cy="321.9" r="1.100" fill="#d0d0d0"/><circle cx="677.2" cy="321.9" r="1.300" fill="#b4b4b4"/><circle cx="683.4" cy="321.9" r="1.300" fill="#b4b4b4"/><circle cx="689.6" cy="321.9" r="1.300" fill="#b4b4b4"/><circle cx="695.8" cy="321.9" r="1.300" fill="#b4b4b4"/><circle cx="702.0" cy="321.9" r="1.300" fill="#b4b4b4"/><circle cx="708.2" cy="321.9" r="1.300" fill="#b4b4b4"/><circle cx="714.4" cy="321.9" r="1.300" fill="#b4b4b4"/><circle cx="720.6" cy="321.9" r="1.300" fill="#b4b4b4"/><circle cx="726.8" cy="321.9" r="1.300" fill="#b4b4b4"/><circle cx="733.0" cy="321.9" r="1.300" fill="#b4b4b4"/><circle cx="739.2" cy="321.9" r="1.300" fill="#b4b4b4"/><circle cx="745.4" cy="321.9" r="1.300" fill="#b4b4b4"/><circle cx="751.6" cy="321.9" r="1.300" fill="#b4b4b4"/><circle cx="671.0" cy="329.8" r="1.100" fill="#d0d0d0"/><circle cx="677.2" cy="329.8" r="1.300" fill="#b4b4b4"/><circle cx="683.4" cy="329.8" r="1.300" fill="#b4b4b4"/><circle cx="689.6" cy="329.8" r="1.300" fill="#b4b4b4"/><circle cx="695.8" cy="329.8" r="1.300" fill="#b4b4b4"/><circle cx="702.0" cy="329.8" r="1.300" fill="#b4b4b4"/><circle cx="708.2" cy="329.8" r="1.300" fill="#b4b4b4"/><circle cx="714.4" cy="329.8" r="1.300" fill="#b4b4b4"/><circle cx="720.6" cy="329.8" r="1.300" fill="#b4b4b4"/><circle cx="726.8" cy="329.8" r="1.300" fill="#b4b4b4"/><circle cx="733.0" cy="329.8" r="1.300" fill="#b4b4b4"/><circle cx="739.2" cy="329.8" r="1.300" fill="#b4b4b4"/><circle cx="745.4" cy="329.8" r="1.300" fill="#b4b4b4"/><circle cx="751.6" cy="329.8" r="1.300" fill="#b4b4b4"/><circle cx="671.0" cy="337.7" r="1.100" fill="#d0d0d0"/><circle cx="677.2" cy="337.7" r="1.300" fill="#b4b4b4"/><circle cx="683.4" cy="337.7" r="1.300" fill="#b4b4b4"/><circle cx="689.6" cy="337.7" r="1.300" fill="#b4b4b4"/><circle cx="695.8" cy="337.7" r="1.300" fill="#b4b4b4"/><circle cx="702.0" cy="337.7" r="1.300" fill="#b4b4b4"/><circle cx="708.2" cy="337.7" r="1.300" fill="#b4b4b4"/><circle cx="714.4" cy="337.7" r="1.300" fill="#b4b4b4"/><circle cx="720.6" cy="337.7" r="1.300" fill="#b4b4b4"/><circle cx="726.8" cy="337.7" r="1.300" fill="#b4b4b4"/><circle cx="733.0" cy="337.7" r="1.300" fill="#b4b4b4"/><circle cx="739.2" cy="337.7" r="1.300" fill="#b4b4b4"/><circle cx="745.4" cy="337.7" r="1.300" fill="#b4b4b4"/><circle cx="751.6" cy="337.7" r="1.300" fill="#b4b4b4"/><circle cx="671.0" cy="345.6" r="1.100" fill="#d0d0d0"/><circle cx="677.2" cy="345.6" r="1.300" fill="#b4b4b4"/><circle cx="683.4" cy="345.6" r="1.300" fill="#b4b4b4"/><circle cx="689.6" cy="345.6" r="1.300" fill="#b4b4b4"/><circle cx="695.8" cy="345.6" r="1.300" fill="#b4b4b4"/><circle cx="702.0" cy="345.6" r="1.300" fill="#b4b4b4"/><circle cx="708.2" cy="345.6" r="1.300" fill="#b4b4b4"/><circle cx="714.4" cy="345.6" r="1.300" fill="#b4b4b4"/><circle cx="720.6" cy="345.6" r="1.300" fill="#b4b4b4"/><circle cx="726.8" cy="345.6" r="1.300" fill="#b4b4b4"/><circle cx="733.0" cy="345.6" r="1.300" fill="#b4b4b4"/><circle cx="739.2" cy="345.6" r="1.300" fill="#b4b4b4"/><circle cx="745.4" cy="345.6" r="1.300" fill="#b4b4b4"/><circle cx="751.6" cy="345.6" r="1.300" fill="#b4b4b4"/><circle cx="671.0" cy="353.5" r="1.100" fill="#d0d0d0"/><circle cx="677.2" cy="353.5" r="1.300" fill="#b4b4b4"/><circle cx="683.4" cy="353.5" r="1.300" fill="#b4b4b4"/><circle cx="689.6" cy="353.5" r="1.300" fill="#b4b4b4"/><circle cx="695.8" cy="353.5" r="1.300" fill="#b4b4b4"/><circle cx="702.0" cy="353.5" r="1.300" fill="#b4b4b4"/><circle cx="708.2" cy="353.5" r="1.300" fill="#b4b4b4"/><circle cx="714.4" cy="353.5" r="1.300" fill="#b4b4b4"/><circle cx="720.6" cy="353.5" r="1.300" fill="#b4b4b4"/><circle cx="726.8" cy="353.5" r="1.300" fill="#b4b4b4"/><circle cx="733.0" cy="353.5" r="1.300" fill="#b4b4b4"/><circle cx="739.2" cy="353.5" r="1.300" fill="#b4b4b4"/><circle cx="745.4" cy="353.5" r="1.300" fill="#b4b4b4"/><circle cx="751.6" cy="353.5" r="1.300" fill="#b4b4b4"/><circle cx="671.0" cy="361.0" r="1.100" fill="#d0d0d0"/><circle cx="677.2" cy="361.0" r="1.550" fill="#4a4a4a"/><circle cx="683.4" cy="361.0" r="1.550" fill="#4a4a4a"/><circle cx="689.6" cy="361.0" r="1.550" fill="#4a4a4a"/><circle cx="695.8" cy="361.0" r="1.550" fill="#4a4a4a"/><circle cx="702.0" cy="361.0" r="1.550" fill="#4a4a4a"/><circle cx="708.2" cy="361.0" r="1.550" fill="#4a4a4a"/><circle cx="714.4" cy="361.0" r="1.550" fill="#4a4a4a"/><circle cx="720.6" cy="361.0" r="1.550" fill="#4a4a4a"/><circle cx="726.8" cy="361.0" r="1.550" fill="#4a4a4a"/><circle cx="733.0" cy="361.0" r="1.550" fill="#4a4a4a"/><circle cx="739.2" cy="361.0" r="1.550" fill="#4a4a4a"/><circle cx="745.4" cy="361.0" r="1.550" fill="#4a4a4a"/><circle cx="751.6" cy="361.0" r="1.550" fill="#4a4a4a"/><circle cx="671.0" cy="369.3" r="1.100" fill="#d0d0d0"/><circle cx="677.2" cy="369.3" r="1.550" fill="#4a4a4a"/><circle cx="683.4" cy="369.3" r="1.550" fill="#4a4a4a"/><circle cx="689.6" cy="369.3" r="1.550" fill="#4a4a4a"/><circle cx="695.8" cy="369.3" r="1.550" fill="#4a4a4a"/><circle cx="702.0" cy="369.3" r="1.550" fill="#4a4a4a"/><circle cx="708.2" cy="369.3" r="1.550" fill="#4a4a4a"/><circle cx="714.4" cy="369.3" r="1.550" fill="#4a4a4a"/><circle cx="720.6" cy="369.3" r="1.550" fill="#4a4a4a"/><circle cx="726.8" cy="369.3" r="1.550" fill="#4a4a4a"/><circle cx="733.0" cy="369.3" r="1.550" fill="#4a4a4a"/><circle cx="739.2" cy="369.3" r="1.550" fill="#4a4a4a"/><circle cx="745.4" cy="369.3" r="1.550" fill="#4a4a4a"/><circle cx="751.6" cy="369.3" r="1.550" fill="#4a4a4a"/><circle cx="671.0" cy="377.5" r="1.100" fill="#d0d0d0"/><circle cx="677.2" cy="377.5" r="1.550" fill="#4a4a4a"/><circle cx="683.4" cy="377.5" r="1.550" fill="#4a4a4a"/><circle cx="689.6" cy="377.5" r="1.550" fill="#4a4a4a"/><circle cx="695.8" cy="377.5" r="1.550" fill="#4a4a4a"/><circle cx="702.0" cy="377.5" r="1.550" fill="#4a4a4a"/><circle cx="708.2" cy="377.5" r="1.550" fill="#4a4a4a"/><circle cx="714.4" cy="377.5" r="1.550" fill="#4a4a4a"/><circle cx="720.6" cy="377.5" r="1.550" fill="#4a4a4a"/><circle cx="726.8" cy="377.5" r="1.550" fill="#4a4a4a"/><circle cx="733.0" cy="377.5" r="1.550" fill="#4a4a4a"/><circle cx="739.2" cy="377.5" r="1.550" fill="#4a4a4a"/><circle cx="745.4" cy="377.5" r="1.550" fill="#4a4a4a"/><circle cx="751.6" cy="377.5" r="1.550" fill="#4a4a4a"/><circle cx="671.0" cy="385.5" r="1.100" fill="#d0d0d0"/><circle cx="677.2" cy="385.5" r="1.550" fill="#4a4a4a"/><circle cx="683.4" cy="385.5" r="1.550" fill="#4a4a4a"/><circle cx="689.6" cy="385.5" r="1.550" fill="#4a4a4a"/><circle cx="695.8" cy="385.5" r="1.550" fill="#4a4a4a"/><circle cx="702.0" cy="385.5" r="1.550" fill="#4a4a4a"/><circle cx="708.2" cy="385.5" r="1.550" fill="#4a4a4a"/><circle cx="714.4" cy="385.5" r="1.550" fill="#4a4a4a"/><circle cx="720.6" cy="385.5" r="1.550" fill="#4a4a4a"/><circle cx="726.8" cy="385.5" r="1.550" fill="#4a4a4a"/><circle cx="733.0" cy="385.5" r="1.550" fill="#4a4a4a"/><circle cx="739.2" cy="385.5" r="1.550" fill="#4a4a4a"/><circle cx="745.4" cy="385.5" r="1.550" fill="#4a4a4a"/><circle cx="751.6" cy="385.5" r="1.550" fill="#4a4a4a"/><circle cx="671.0" cy="394.0" r="1.100" fill="#d0d0d0"/><circle cx="677.2" cy="394.0" r="1.550" fill="#4a4a4a"/><circle cx="683.4" cy="394.0" r="1.550" fill="#4a4a4a"/><circle cx="689.6" cy="394.0" r="1.550" fill="#4a4a4a"/><circle cx="695.8" cy="394.0" r="1.550" fill="#4a4a4a"/><circle cx="702.0" cy="394.0" r="1.550" fill="#4a4a4a"/><circle cx="708.2" cy="394.0" r="1.550" fill="#4a4a4a"/><circle cx="714.4" cy="394.0" r="1.550" fill="#4a4a4a"/><circle cx="720.6" cy="394.0" r="1.550" fill="#4a4a4a"/><circle cx="726.8" cy="394.0" r="1.550" fill="#4a4a4a"/><circle cx="733.0" cy="394.0" r="1.550" fill="#4a4a4a"/><circle cx="739.2" cy="394.0" r="1.550" fill="#4a4a4a"/><circle cx="745.4" cy="394.0" r="1.550" fill="#4a4a4a"/><circle cx="751.6" cy="394.0" r="1.550" fill="#4a4a4a"/><circle cx="671.0" cy="402.0" r="1.100" fill="#d0d0d0"/><circle cx="677.2" cy="402.0" r="1.100" fill="#d0d0d0"/><circle cx="683.4" cy="402.0" r="1.100" fill="#d0d0d0"/><circle cx="689.6" cy="402.0" r="1.100" fill="#d0d0d0"/><circle cx="695.8" cy="402.0" r="1.100" fill="#d0d0d0"/><circle cx="702.0" cy="402.0" r="1.100" fill="#d0d0d0"/><circle cx="708.2" cy="402.0" r="1.100" fill="#d0d0d0"/><circle cx="714.4" cy="402.0" r="1.100" fill="#d0d0d0"/><circle cx="720.6" cy="402.0" r="1.100" fill="#d0d0d0"/><circle cx="726.8" cy="402.0" r="1.100" fill="#d0d0d0"/><circle cx="733.0" cy="402.0" r="1.100" fill="#d0d0d0"/><circle cx="739.2" cy="402.0" r="1.100" fill="#d0d0d0"/><circle cx="745.4" cy="402.0" r="1.100" fill="#d0d0d0"/><circle cx="751.6" cy="402.0" r="1.100" fill="#d0d0d0"/><circle cx="671.0" cy="410.0" r="1.100" fill="#d0d0d0"/><circle cx="677.2" cy="410.0" r="1.100" fill="#d0d0d0"/><circle cx="683.4" cy="410.0" r="1.100" fill="#d0d0d0"/><circle cx="689.6" cy="410.0" r="1.100" fill="#d0d0d0"/><circle cx="695.8" cy="410.0" r="1.100" fill="#d0d0d0"/><circle cx="702.0" cy="410.0" r="1.100" fill="#d0d0d0"/><circle cx="708.2" cy="410.0" r="1.100" fill="#d0d0d0"/><circle cx="714.4" cy="410.0" r="1.100" fill="#d0d0d0"/><circle cx="720.6" cy="410.0" r="1.100" fill="#d0d0d0"/><circle cx="726.8" cy="410.0" r="1.100" fill="#d0d0d0"/><circle cx="733.0" cy="410.0" r="1.100" fill="#d0d0d0"/><circle cx="739.2" cy="410.0" r="1.100" fill="#d0d0d0"/><circle cx="745.4" cy="410.0" r="1.100" fill="#d0d0d0"/><circle cx="751.6" cy="410.0" r="1.100" fill="#d0d0d0"/><circle cx="671.0" cy="418.0" r="1.100" fill="#d0d0d0"/><circle cx="677.2" cy="418.0" r="1.100" fill="#d0d0d0"/><circle cx="683.4" cy="418.0" r="1.100" fill="#d0d0d0"/><circle cx="689.6" cy="418.0" r="1.100" fill="#d0d0d0"/><circle cx="695.8" cy="418.0" r="1.100" fill="#d0d0d0"/><circle cx="702.0" cy="418.0" r="1.100" fill="#d0d0d0"/><circle cx="708.2" cy="418.0" r="1.100" fill="#d0d0d0"/><circle cx="714.4" cy="418.0" r="1.100" fill="#d0d0d0"/><circle cx="720.6" cy="418.0" r="1.100" fill="#d0d0d0"/><circle cx="726.8" cy="418.0" r="1.100" fill="#d0d0d0"/><circle cx="733.0" cy="418.0" r="1.100" fill="#d0d0d0"/><circle cx="739.2" cy="418.0" r="1.100" fill="#d0d0d0"/><circle cx="745.4" cy="418.0" r="1.100" fill="#d0d0d0"/><circle cx="751.6" cy="418.0" r="1.100" fill="#d0d0d0"/><circle cx="671.0" cy="426.0" r="1.100" fill="#d0d0d0"/><circle cx="677.2" cy="426.0" r="1.100" fill="#d0d0d0"/><circle cx="683.4" cy="426.0" r="1.100" fill="#d0d0d0"/><circle cx="689.6" cy="426.0" r="1.100" fill="#d0d0d0"/><circle cx="695.8" cy="426.0" r="1.100" fill="#d0d0d0"/><circle cx="702.0" cy="426.0" r="1.100" fill="#d0d0d0"/><circle cx="708.2" cy="426.0" r="1.100" fill="#d0d0d0"/><circle cx="714.4" cy="426.0" r="1.100" fill="#d0d0d0"/><circle cx="720.6" cy="426.0" r="1.100" fill="#d0d0d0"/><circle cx="726.8" cy="426.0" r="1.100" fill="#d0d0d0"/><circle cx="733.0" cy="426.0" r="1.100" fill="#d0d0d0"/><circle cx="739.2" cy="426.0" r="1.100" fill="#d0d0d0"/><circle cx="745.4" cy="426.0" r="1.100" fill="#d0d0d0"/><circle cx="751.6" cy="426.0" r="1.100" fill="#d0d0d0"/><path d="M680 399.500H760V452H684Q676.500 452 676.500 445V403Q676.500 399.500 680 399.500Z" fill="#f3f3f3" stroke="#ddd" stroke-width=".6"/><path d="M690 403h70" stroke="#e2e2e2" stroke-width="1.500"/><rect x="666" y="456" width="94" height="36" fill="url(#refl)" opacity=".55"/><rect x="682" y="451" width="22" height="3" rx="1.500" fill="#ccc"/></svg>
<div id="popup"><div class="cn" style="left:6.500px;top:0;font-size:16.500px;line-height:23px;color:#f0f0f0"><span>PopUp IP Liste Aktiv</span></div></div>
<svg class="abs" style="left:25px;top:505px" width="140" height="140" viewBox="0 0 140 140"><defs><radialGradient id="gl" cx=".36" cy=".24" r=".85"><stop offset="0" stop-color="#fff"/><stop offset=".28" stop-color="#e8f1ff"/><stop offset=".52" stop-color="#a8caf9"/><stop offset=".78" stop-color="#5590ee"/><stop offset="1" stop-color="#2a5fdc"/></radialGradient><radialGradient id="gg" cx=".5" cy=".5" r=".5"><stop offset=".88" stop-color="#eaf4ff" stop-opacity=".95"/><stop offset=".94" stop-color="#bcd8ff" stop-opacity=".45"/><stop offset="1" stop-color="#9cc8ff" stop-opacity="0"/></radialGradient><clipPath id="gc"><circle cx="71" cy="63.500" r="57"/></clipPath></defs><circle cx="71" cy="63.500" r="64" fill="url(#gg)"/><circle cx="71" cy="63.500" r="57.300" fill="url(#gl)"/><g clip-path="url(#gc)"><g fill="#fff" opacity=".93"><path d="M72.400 37L80 28L86.700 18.400L97 17L103.900 22.700L103 31L98.200 41.300L90 43L83.800 48.400L75.200 45.600Z"/><path d="M75.200 54.200L83.800 51.300L95 52.500L103.900 51.300L110 57L116.800 65.600L115 76L112.500 85.700L108.200 88.600L101 82L95.300 80L86.700 78.500L79 75L75.200 71.400L73.500 65.600Z"/><path d="M23.700 37L32 30L42.300 28.400L55.200 31.200L52 41L49.400 51.300L47 60L43.700 68.500L38 71.400L35 62L32.200 54.200L23.700 54.200L18 46Z"/><path d="M49.400 85.700L62 83.500L78.100 87.100L79.500 100L76 109L72.400 117.200L65.200 115.800L60 108L56.600 102.900L51 99L48 94.300Z"/></g><path d="M95.300 80L103.900 94.300L101 105.700L92.400 108.600L86 100L83 90L86.700 78.500Z" fill="#d9e8ff" opacity=".8"/><g fill="none" stroke="#2f8de4" stroke-width="1.500" opacity=".9"><path d="M52 14Q96 40 108 88"/><path d="M30 36Q38 76 86 112"/><path d="M24 88Q70 96 116 84"/><path d="M62 36Q50 56 42 68"/><path d="M62 36Q80 10 110 8"/></g><g fill="#fff"><circle cx="62" cy="31" r="3.200" opacity=".9"/><circle cx="42" cy="67" r="3.200" opacity=".9"/><circle cx="108" cy="87" r="3" opacity=".9"/><circle cx="57" cy="91" r="3" opacity=".9"/></g></g><g fill="none" stroke="#4aa8f0" stroke-width="1" opacity=".55"><ellipse cx="71" cy="66" rx="66" ry="22" transform="rotate(14 71 66)"/><ellipse cx="71" cy="62" rx="64" ry="26" transform="rotate(-48 71 62)"/></g></svg>
<svg class="abs" style="left:-175px;top:-116px;filter:drop-shadow(0 0 1.200px #2aa818)" width="760" height="900" viewBox="0 0 760 900"><g fill="none" stroke="#4be234" stroke-width="3" stroke-linejoin="round"><path d="M441.500 637V572.500H543"/><path d="M594 624V638"/><path d="M491 690.500H543"/><path d="M515 690.500V815H556"/><path d="M627 814.500H665"/><path d="M646 692.500H749"/><path d="M441.500 738V749"/><path d="M271.500 744V798.500H388"/></g></svg>
<div class="nb " style="left:367px;top:410px;width:103px;height:99px"><div class="ip"><span>192.168.178.40</span></div><svg class="abs" style="left:32.500px;top:19px" width="36" height="60" viewBox="0 0 36 60"><rect x="1.500" y="1.500" width="33" height="57" rx="1.500" fill="none" stroke="#4be234" stroke-width="2.2" stroke-linecap="round" stroke-linejoin="round"/><rect x="8" y="7" width="8" height="8" fill="none" stroke="#4be234" stroke-width="1" stroke-linecap="round" stroke-linejoin="round"/><rect x="8" y="19.5" width="8" height="8" fill="none" stroke="#4be234" stroke-width="1" stroke-linecap="round" stroke-linejoin="round"/><rect x="8" y="32" width="8" height="8" fill="none" stroke="#4be234" stroke-width="1" stroke-linecap="round" stroke-linejoin="round"/><rect x="8" y="44.5" width="8" height="8" fill="none" stroke="#4be234" stroke-width="1" stroke-linecap="round" stroke-linejoin="round"/><rect x="20" y="7" width="8" height="8" fill="none" stroke="#4be234" stroke-width="1" stroke-linecap="round" stroke-linejoin="round"/><rect x="20" y="19.5" width="8" height="8" fill="none" stroke="#4be234" stroke-width="1" stroke-linecap="round" stroke-linejoin="round"/><rect x="20" y="32" width="8" height="8" fill="none" stroke="#4be234" stroke-width="1" stroke-linecap="round" stroke-linejoin="round"/><rect x="20" y="44.5" width="8" height="8" fill="none" stroke="#4be234" stroke-width="1" stroke-linecap="round" stroke-linejoin="round"/></svg><div class="nm">Switch TV</div></div>
<div class="nb selb" style="left:212px;top:521px;width:105px;height:102px"><div class="ip"><span>192.168.178.1</span></div><svg class="abs" style="left:20.500px;top:26px" width="60" height="46" viewBox="0 0 60 46"><rect x="2.500" y="29" width="55" height="9.500" rx="2.500" fill="none" stroke="#4be234" stroke-width="3.2" stroke-linecap="round" stroke-linejoin="round"/><path d="M6.500 40.300h9M44.500 40.300h9" fill="none" stroke="#4be234" stroke-width="2.8" stroke-linecap="round" stroke-linejoin="round"/><path d="M7 2.500L12 27M53.500 2.500L48.500 27" fill="none" stroke="#4be234" stroke-width="2.4" stroke-linecap="round" stroke-linejoin="round"/><path d="M9.500 19L11.800 27.500M51 19L48.800 27.500" fill="none" stroke="#4be234" stroke-width="3.6" stroke-linecap="round" stroke-linejoin="round"/><g fill="#4be234"><ellipse cx="10.500" cy="33.800" rx="2" ry="1.500"/><ellipse cx="35" cy="34" rx="2" ry="1.500"/><ellipse cx="40.300" cy="34" rx="2" ry="1.500"/><ellipse cx="45.600" cy="34" rx="2" ry="1.500"/><ellipse cx="50.900" cy="34" rx="2" ry="1.500"/></g></svg><div class="nm">Router FritzBox</div></div>
<div class="nb " style="left:368px;top:522px;width:103px;height:100px"><div class="ip"><span>192.168.178.20</span></div><svg class="abs" style="left:20px;top:23.500px" width="62" height="52" viewBox="0 0 62 52"><rect x="2" y="21.500" width="33.500" height="24" rx="1.500" fill="none" stroke="#4be234" stroke-width="2.6" stroke-linecap="round" stroke-linejoin="round"/><path d="M12 49.500h14M19 46v3" fill="none" stroke="#4be234" stroke-width="2.4" stroke-linecap="round" stroke-linejoin="round"/><rect x="41.500" y="2" width="18" height="46.500" rx="1.500" fill="none" stroke="#4be234" stroke-width="2.4" stroke-linecap="round" stroke-linejoin="round"/><path d="M45 8h11M45 13h11" fill="none" stroke="#4be234" stroke-width="1.5" stroke-linecap="round" stroke-linejoin="round"/><circle cx="50.500" cy="29.500" r="1.200" fill="#4be234"/><rect x="44" y="34.500" width="13" height="11.500" rx="2.500" fill="#4be234"/></svg><div class="nm">Host Medion</div></div>
<div class="nb " style="left:213px;top:633px;width:103px;height:100px"><svg class="abs" style="left:20px;top:34px" width="62" height="30" viewBox="0 0 62 30"><rect x="2" y="2" width="58" height="25" rx="2" fill="none" stroke="#4be234" stroke-width="2.8" stroke-linecap="round" stroke-linejoin="round"/><path d="M7.500 7V22M55 7V22" fill="none" stroke="#4be234" stroke-width="2" stroke-linecap="round" stroke-linejoin="round"/><rect x="31" y="7.500" width="21" height="5.600" rx="1.500" fill="#4be234"/><rect x="31.500" y="15.500" width="20" height="1.800" rx=".9" fill="none" stroke="#4be234" stroke-width="1.1" stroke-linecap="round" stroke-linejoin="round"/><rect x="31.500" y="19" width="20" height="1.800" rx=".9" fill="none" stroke="#4be234" stroke-width="1.1" stroke-linecap="round" stroke-linejoin="round"/><ellipse cx="26" cy="12.300" rx="1.100" ry="1.500" fill="none" stroke="#4be234" stroke-width="0.9" stroke-linecap="round" stroke-linejoin="round"/><circle cx="26" cy="16" r="1" fill="#4be234"/><circle cx="26" cy="19.500" r="1" fill="#4be234"/></svg></div>
<div class="nb " style="left:381px;top:665px;width:71px;height:70px"><svg class="abs" style="left:14.300px;top:15.200px" width="41.500" height="41.500" viewBox="0 0 44 44"><rect x="19.500" y="13.500" width="5" height="4.600" rx="1.200" fill="none" stroke="#4be234" stroke-width="1.7" stroke-linecap="round" stroke-linejoin="round"/><path d="M22 19V42" fill="none" stroke="#4be234" stroke-width="2" stroke-linecap="round" stroke-linejoin="round"/><path d="M15.52 11.83A7.6 7.6 0 0 0 15.52 19.77M28.48 11.83A7.6 7.6 0 0 1 28.48 19.77" fill="none" stroke="#4be234" stroke-width="1.8" stroke-linecap="round" stroke-linejoin="round"/><path d="M12.44 8.07A12.3 12.3 0 0 0 12.44 23.53M31.56 8.07A12.3 12.3 0 0 1 31.56 23.53" fill="none" stroke="#4be234" stroke-width="1.8" stroke-linecap="round" stroke-linejoin="round"/><path d="M9.01 5.30A16.7 16.7 0 0 0 9.01 26.30M34.99 5.30A16.7 16.7 0 0 1 34.99 26.30" fill="none" stroke="#4be234" stroke-width="1.8" stroke-linecap="round" stroke-linejoin="round"/><path d="M5.67 2.60A21 21 0 0 0 5.67 29.00M38.33 2.60A21 21 0 0 1 38.33 29.00" fill="none" stroke="#4be234" stroke-width="1.8" stroke-linecap="round" stroke-linejoin="round"/></svg><div class="nm">W-Lan G5</div></div>
<div class="nb " style="left:490px;top:665px;width:71px;height:70px"><svg class="abs" style="left:14.300px;top:15.200px" width="41.500" height="41.500" viewBox="0 0 44 44"><rect x="19.500" y="13.500" width="5" height="4.600" rx="1.200" fill="none" stroke="#4be234" stroke-width="1.7" stroke-linecap="round" stroke-linejoin="round"/><path d="M22 19V42" fill="none" stroke="#4be234" stroke-width="2" stroke-linecap="round" stroke-linejoin="round"/><path d="M15.52 11.83A7.6 7.6 0 0 0 15.52 19.77M28.48 11.83A7.6 7.6 0 0 1 28.48 19.77" fill="none" stroke="#4be234" stroke-width="1.8" stroke-linecap="round" stroke-linejoin="round"/><path d="M12.44 8.07A12.3 12.3 0 0 0 12.44 23.53M31.56 8.07A12.3 12.3 0 0 1 31.56 23.53" fill="none" stroke="#4be234" stroke-width="1.8" stroke-linecap="round" stroke-linejoin="round"/><path d="M9.01 5.30A16.7 16.7 0 0 0 9.01 26.30M34.99 5.30A16.7 16.7 0 0 1 34.99 26.30" fill="none" stroke="#4be234" stroke-width="1.8" stroke-linecap="round" stroke-linejoin="round"/><path d="M5.67 2.60A21 21 0 0 0 5.67 29.00M38.33 2.60A21 21 0 0 1 38.33 29.00" fill="none" stroke="#4be234" stroke-width="1.8" stroke-linecap="round" stroke-linejoin="round"/></svg><div class="nm">W-Lan G2</div></div>
<div class="nb " style="left:573px;top:522px;width:20px;height:100px"></div>
<svg class="abs" style="left:300px;top:607px" width="10" height="10" viewBox="0 0 10 10"><path d="M1 9L9 1M4 9L9 4M7 9L9 7" stroke="#ccc" stroke-width="1"/></svg>
<div id="cvline"></div>
</div>
</div>
<div id="right">
<div id="rband"></div>
<div id="rtitle"><b>Eigenschaften</b> <span>(MDCSS v2.5 30.04.2020)</span></div>
<div class="btn" style="left:1891px;top:93px;width:18px;height:18px"><div class="abs" style="left:3px;top:7px;width:11px;height:3px;background:repeating-linear-gradient(90deg,#888 0,#888 1px,transparent 1px,transparent 2px);-webkit-mask:linear-gradient(#000 0 1px,transparent 1px 2px,#000 2px 3px)"></div></div>
<div class="rtab" style="left:1590px;width:47px">View</div>
<div class="rtab act" style="left:1640px;width:73px;top:107px;height:27px">w01370</div>
<div class="rtab" style="left:1716px;width:42px">CSS</div>
<div class="rtab" style="left:1761px;width:66px">Skripte</div>
<div id="rline"></div>
<div id="rscroll">
<div class="pl" style="top:135px;">ID:</div><div class="pi" style="top:126px;width:179px;">ping.0.Medion(Test).192_168</div><div class="btn psb" style="top:124px"><svg width="10" height="10" viewBox="0 0 10 10"><rect x="3" y="1" width="6" height="8" fill="#888"/><path d="M1.500 1v8" stroke="#888" stroke-width="1.200" stroke-dasharray="1 1"/></svg></div><div class="pl" style="top:152px;left:1638px;width:auto">Alive Router AVM 6590</div><div class="pl" style="top:171px;">Min:</div><div class="pi" style="top:168px;width:231px;">0</div><div class="pl" style="top:193px;">Max:</div><div class="pi" style="top:190px;width:231px;">1</div><div class="pl" style="top:212px;">Knopf-<br>Viereck<br>:</div><div class="pcb" style="top:226px"></div><div class="pl" style="top:256px;">Inverti<br>ere<br>Wert:</div><div class="pcb" style="top:270px"></div><div class="pl" style="top:300px;">Zeige<br>aktiven<br>Hinterg<br>rund:</div><div class="pcb" style="top:321px"></div><div id="symh"><b>Symbole</b><div class="pcbb"><svg width="13" height="13" viewBox="0 0 13 13"><path d="M3 6.800L5.500 9.300L10.200 3.800" fill="none" stroke="#fff" stroke-width="1.900"/></svg></div><div class="btn" style="left:259px;top:1px;width:22px;height:21px"><div class="abs" style="left:6px;top:7px;border-bottom:5px solid #888;border-left:4px solid transparent;border-right:4px solid transparent"></div></div></div><div class="pl" style="top:382px;font-style:italic;">Symbol<br>wert<br>für<br>0%:</div><div class="pi" style="top:400px;width:231px;">false</div><div class="pl" style="top:440px;">Symbol<br>für<br>0%:</div><div class="pi" style="top:451px;width:179px;">/icons-mfd-svg/it_router.svg</div><div class="btn psb" style="top:450px"><svg width="10" height="10" viewBox="0 0 10 10"><rect x="3" y="1" width="6" height="8" fill="#888"/><path d="M1.500 1v8" stroke="#888" stroke-width="1.200" stroke-dasharray="1 1"/></svg></div><div class="pl" style="top:484px;">Symbol<br>farbe<br>bei<br>0%:</div><div class="pi" style="top:502px;width:179px;background:#d03434;color:#fff;border-color:#555;border-width:2px 1px 1px 2px;line-height:18px;padding-left:3px">#e00000</div><div class="btn psb" style="top:501px"><svg width="10" height="10" viewBox="0 0 10 10"><rect x="3" y="1" width="6" height="8" fill="#888"/><path d="M1.500 1v8" stroke="#888" stroke-width="1.200" stroke-dasharray="1 1"/></svg></div><div class="pl" style="top:542px;">Symbol<br>wert<br>für<br>10%:</div><div class="pi" style="top:560px;width:231px;"></div><div class="pl" style="top:600px;">Symbol<br>für<br>10%:</div><div class="pi" style="top:611px;width:179px;"></div><div class="btn psb" style="top:610px"><svg width="10" height="10" viewBox="0 0 10 10"><rect x="3" y="1" width="6" height="8" fill="#888"/><path d="M1.500 1v8" stroke="#888" stroke-width="1.200" stroke-dasharray="1 1"/></svg></div><div class="pl" style="top:644px;">Symbol<br>farbe<br>bei<br>10%:</div><div class="pi" style="top:662px;width:179px;"></div><div class="btn psb" style="top:661px"><svg width="10" height="10" viewBox="0 0 10 10"><rect x="3" y="1" width="6" height="8" fill="#888"/><path d="M1.500 1v8" stroke="#888" stroke-width="1.200" stroke-dasharray="1 1"/></svg></div><div class="pl" style="top:702px;">Symbol<br>wert<br>für<br>20%:</div><div class="pi" style="top:720px;width:231px;"></div><div class="pl" style="top:760px;">Symbol<br>für<br>20%:</div><div class="pi" style="top:771px;width:179px;"></div><div class="btn psb" style="top:770px"><svg width="10" height="10" viewBox="0 0 10 10"><rect x="3" y="1" width="6" height="8" fill="#888"/><path d="M1.500 1v8" stroke="#888" stroke-width="1.200" stroke-dasharray="1 1"/></svg></div><div class="pl" style="top:804px;">Symbol<br>farbe<br>bei<br>20%:</div><div class="pi" style="top:822px;width:179px;"></div><div class="btn psb" style="top:821px"><svg width="10" height="10" viewBox="0 0 10 10"><rect x="3" y="1" width="6" height="8" fill="#888"/><path d="M1.500 1v8" stroke="#888" stroke-width="1.200" stroke-dasharray="1 1"/></svg></div><div class="pl" style="top:862px;">Symbol<br>wert<br>für<br>30%:</div><div class="pi" style="top:880px;width:231px;"></div><div class="pl" style="top:920px;">Symbol<br>für<br>30%:</div><div class="pi" style="top:931px;width:179px;"></div><div class="btn psb" style="top:930px"><svg width="10" height="10" viewBox="0 0 10 10"><rect x="3" y="1" width="6" height="8" fill="#888"/><path d="M1.500 1v8" stroke="#888" stroke-width="1.200" stroke-dasharray="1 1"/></svg></div>
</div>
</div>
<div id="dbox"></div>
<div id="dlg">
<div id="dtitle"><span>Datei Manager</span><div class="btn" id="dclose"><svg width="12" height="12" viewBox="0 0 12 12"><path d="M2.200 2.200L9.800 9.800M9.800 2.200L2.200 9.800" stroke="#727272" stroke-width="2.900"/></svg></div></div>
<div id="dtool"></div>
<div class="fbtn" style="left:833px;width:25px"><svg width="24" height="24" viewBox="0 0 24 24"><path d="M4 17A8.800 9.600 0 0 1 13 2.800M20 7A8.800 9.600 0 0 1 11 21.200" fill="none" stroke="#8ab0ea" stroke-width="2.800"/><path d="M12.500 .2L19.500 1.200L15.200 7ZM11.500 23.800L4.500 22.800L8.800 17Z" fill="#8ab0ea"/></svg></div><div class="fbtn" style="left:887px;width:25px"><svg width="24" height="24" viewBox="0 0 24 24"><path d="M2.500 5.500a1.500 1.500 0 0 1 1.500 -1.500h5l2.500 2.500h8a1.500 1.500 0 0 1 1.500 1.500v10a1.500 1.500 0 0 1 -1.500 1.500h-15.500a1.500 1.500 0 0 1 -1.500 -1.500z" fill="#fbc02d"/><path d="M2.500 5.500a1.500 1.500 0 0 1 1.500 -1.500h5l2.500 2.500h-9z" fill="#f6a623"/><circle cx="18.500" cy="18.500" r="4.700" fill="#43a047" stroke="#fff" stroke-width="1"/><path d="M16.300 18.500h4.400M18.500 16.300v4.400" stroke="#fff" stroke-width="1.400"/></svg></div><div class="fbtn" style="left:921px;width:25px"><svg width="24" height="24" viewBox="0 0 24 24" opacity=".55"><path d="M3.500 3.500h17" stroke="#5fc1b4" stroke-width="1.600"/><path d="M12 6l5 6h-3.200v3h-3.600v-3h-3.200z" fill="#5fc1b4"/><path d="M10.200 17h3.600M10.200 19.500h3.600M10.200 22h3.600" stroke="#5fc1b4" stroke-width="1.300"/></svg></div><div class="fbtn" style="left:954px;width:25px"><svg width="24" height="24" viewBox="0 0 24 24"><path d="M10.200 3h3.600M10.200 5.500h3.600" stroke="#1565c0" stroke-width="1.300"/><path d="M10.200 7h3.600v5h3.200l-5 6l-5 -6h3.200z" fill="#1565c0"/><path d="M3.500 21h17" stroke="#1565c0" stroke-width="2"/></svg></div><div class="fbtn" style="left:988px;width:25px"><svg width="24" height="24" viewBox="0 0 24 24"><rect x="2.500" y="7.500" width="19.500" height="10" rx="2" fill="#fff" stroke="#999" stroke-width="1"/><path d="M5 9.500h3M5 15.500h3M6.500 9.500v6" stroke="#666" stroke-width=".9" fill="none"/><ellipse cx="12" cy="23" rx="8" ry="1.500" fill="#ccc" opacity=".7"/></svg></div><div class="fbtn" style="left:1022px;width:25px"><svg width="24" height="24" viewBox="0 0 24 24"><g transform="translate(0 -1)"><path d="M6 8.500h12l-1.200 12.500h-9.600z" fill="#7b86d6"/><path d="M5 6h14v2h-14zM9.500 4h5v2h-5z" fill="#5c6bc0"/><path d="M9 10v9M12 10v9M15 10v9" stroke="#aab1ea" stroke-width="1.100"/></g></svg></div><div class="fbtn" style="left:1075px;width:25px"><svg width="24" height="24" viewBox="0 0 24 24"><rect x="1.500" y="3.500" width="21" height="17" fill="#fff" stroke="#a8b3c2" stroke-width="1"/><rect x="1.500" y="3.500" width="21" height="2.500" fill="#c9d2de"/><path d="M4 9.500h6M12.500 9.500h8M4 13h6M12.500 13h8M4 16.500h6M12.500 16.500h8" stroke="#c4c9d0" stroke-width="1.200"/></svg></div><div class="fbtn" style="left:1109px;width:25px"><svg width="24" height="24" viewBox="0 0 24 24"><rect x="1.500" y="3.500" width="21" height="17" fill="#fff" stroke="#a8b3c2" stroke-width="1"/><rect x="1.500" y="3.500" width="21" height="2.500" fill="#c9d2de"/><rect x="5.500" y="7.500" width="3.500" height="4.500" fill="#4a8fe0" stroke="#999" stroke-width=".5"/><rect x="15" y="7.500" width="3.500" height="4.500" fill="#4caf50" stroke="#999" stroke-width=".5"/><rect x="5.500" y="14" width="3.500" height="4.500" fill="#e53935" stroke="#999" stroke-width=".5"/><rect x="15" y="14" width="3.500" height="4.500" fill="#bbb" stroke="#999" stroke-width=".5"/></svg></div><div class="fbtn" style="left:1163px;width:25px"><svg width="24" height="24" viewBox="0 0 24 24" opacity=".6"><defs><radialGradient id="og" cx=".5" cy=".35" r=".7"><stop offset="0" stop-color="#9db7ea"/><stop offset="1" stop-color="#4a6fc4"/></radialGradient></defs><circle cx="12" cy="12" r="10.500" fill="url(#og)" stroke="#b9c7e6" stroke-width="1"/><path d="M9 6.500L17.500 12L9 17.500Z" fill="#fff"/></svg></div><div class="fbtn" style="left:1196px;width:25px"><svg width="24" height="24" viewBox="0 0 24 24" opacity=".6"><circle cx="12" cy="12" r="10.500" fill="url(#og)" stroke="#b9c7e6" stroke-width="1"/><rect x="7.500" y="7.500" width="9" height="9" rx="1" fill="#fff"/></svg></div>
<div id="back"><svg width="40" height="24" viewBox="0 0 40 24"><path d="M1 12L12 1.500V8.500H37.500V15.500H12V22.500Z" fill="#fff"/></svg></div>
<div id="filter">Filter eingeben...</div>
<div class="fbtn" style="left:1494px;width:37px;top:140px;height:27px;border-bottom:1px solid #ddd;border-radius:3px"><svg class="abs" style="left:12px;top:7px" width="11" height="11" viewBox="0 0 11 11"><circle cx="5.500" cy="5.500" r="2.700" fill="none" stroke="#727272" stroke-width="2.200"/><path d="M5.500 .3v10.400M.3 5.500h10.400M1.800 1.800l7.400 7.400M9.200 1.800l-7.400 7.400" stroke="#727272" stroke-width="1.900" stroke-dasharray="1.800 6.800"/></svg></div>
<div class="fbtn" style="left:1535px;width:37px;top:140px;height:27px;background:#fdfbf0;border:1px solid #fbe6a0;border-radius:3px"><svg class="abs" style="left:11px;top:6px" width="14" height="12" viewBox="0 0 14 12"><path d="M7 .8L13.300 11.200H.7Z" fill="#2f7bf5" stroke="#2f7bf5" stroke-linejoin="round" stroke-width="1"/><rect x="6.200" y="4" width="1.600" height="3.600" fill="#fff"/><rect x="6.200" y="8.500" width="1.600" height="1.500" fill="#fff"/></svg></div>
<div id="pfl">Pfad:</div>
<div id="pfad">/icons-mfd-svg/</div>
<div id="files">
<div class="tile" style="left:5px;top:1px"><svg class="ico" width="80" height="80" viewBox="0 0 80 80" ><rect x="5" y="41" width="61.500" height="37.200" rx="2" fill="none" stroke="#fff" stroke-width="4" stroke-linecap="round" stroke-linejoin="round"/><path d="M56.500 39L71.500 2.800" fill="none" stroke="#fff" stroke-width="3.4" stroke-linecap="round" stroke-linejoin="round"/><path d="M10 39.500h6M20 39.500h6" fill="none" stroke="#fff" stroke-width="2.5" stroke-linecap="round" stroke-linejoin="round"/><path d="M11.500 46.800H59" fill="none" stroke="#fff" stroke-width="3.6" stroke-linecap="round" stroke-linejoin="round"/><path d="M39 55.200H56M34.500 60.400H60M34.500 65.200H60M39 70.200H56" fill="none" stroke="#fff" stroke-width="3.4" stroke-linecap="round" stroke-linejoin="round"/></svg><div class="fn">it_radio.svg</div></div>
<div class="tile" style="left:165px;top:1px"><svg class="ico" width="80" height="80" viewBox="0 0 80 80" ><g transform="translate(46.800 48) rotate(44.500)"><rect x="-33" y="-12.500" width="66" height="25" rx="1.500" fill="none" stroke="#fff" stroke-width="2.8" stroke-linecap="round" stroke-linejoin="round"/><g fill="#fff"><rect x="-28.5" y="-8.6" width="2" height="4.800" rx="1"/><rect x="-28.5" y="-2.4" width="2" height="4.800" rx="1"/><rect x="-28.5" y="3.8" width="2" height="4.800" rx="1"/><rect x="-24" y="-8.6" width="2" height="4.800" rx="1"/><rect x="-24" y="-2.4" width="2" height="4.800" rx="1"/><rect x="-24" y="3.8" width="2" height="4.800" rx="1"/><rect x="-19.5" y="-8.6" width="2" height="4.800" rx="1"/><rect x="-19.5" y="-2.4" width="2" height="4.800" rx="1"/><rect x="-19.5" y="3.8" width="2" height="4.800" rx="1"/><rect x="-15" y="3.8" width="2" height="4.800" rx="1"/><rect x="4" y="-8.6" width="2" height="4.800" rx="1"/><rect x="4" y="-2.4" width="2" height="4.800" rx="1"/><rect x="4" y="3.8" width="2" height="4.800" rx="1"/><rect x="8.5" y="-8.6" width="2" height="4.800" rx="1"/><rect x="8.5" y="-2.4" width="2" height="4.800" rx="1"/><rect x="8.5" y="3.8" width="2" height="4.800" rx="1"/><rect x="13" y="-8.6" width="2" height="4.800" rx="1"/><rect x="13" y="-2.4" width="2" height="4.800" rx="1"/><rect x="13" y="3.8" width="2" height="4.800" rx="1"/><rect x="17.5" y="-8.6" width="2" height="4.800" rx="1"/><rect x="17.5" y="-2.4" width="2" height="4.800" rx="1"/><rect x="17.5" y="3.8" width="2" height="4.800" rx="1"/><rect x="22.5" y="-8" width="2" height="2" rx="1"/><rect x="22.5" y="-1" width="2" height="2" rx="1"/><rect x="22.5" y="6" width="2" height="2" rx="1"/><rect x="26.5" y="-8" width="2" height="2" rx="1"/><rect x="26.5" y="-1" width="2" height="2" rx="1"/><rect x="26.5" y="6" width="2" height="2" rx="1"/></g><g fill="none" stroke="#fff" stroke-width=".9"><ellipse cx="-9" cy="0" rx="1.500" ry="2.100"/><ellipse cx="-5.500" cy="-3.800" rx="2.100" ry="1.500"/><ellipse cx="-5.500" cy="3.800" rx="2.100" ry="1.500"/><ellipse cx="-2" cy="0" rx="1.500" ry="2.100"/></g></g><path d="M2.200 27A23.500 23.500 0 0 1 25.700 3.500M8.600 27A17.100 17.100 0 0 1 25.700 9.900M15 27A10.700 10.700 0 0 1 25.700 16.300" fill="none" stroke="#fff" stroke-width="2.4" stroke-linecap="round" stroke-linejoin="round"/></svg><div class="fn">it_remote.svg</div></div>
<div class="tile sel" style="left:325px;top:1px"><svg class="ico" width="80" height="80" viewBox="0 0 80 80" ><rect x="3.600" y="49" width="73.300" height="12" rx="3" fill="none" stroke="#fff" stroke-width="4" stroke-linecap="round" stroke-linejoin="round"/><path d="M8 63.200h12M59.500 63.200h12" fill="none" stroke="#fff" stroke-width="3.6" stroke-linecap="round" stroke-linejoin="round"/><path d="M9 14.500L15.800 46M71.500 14.500L65 46" fill="none" stroke="#fff" stroke-width="2.8" stroke-linecap="round" stroke-linejoin="round"/><path d="M12.600 37L15.500 46.500M68.200 37L65.500 46.500" fill="none" stroke="#fff" stroke-width="4.6" stroke-linecap="round" stroke-linejoin="round"/><g fill="#fff"><ellipse cx="14" cy="55.300" rx="2.700" ry="1.900"/><ellipse cx="46.500" cy="55.500" rx="2.700" ry="1.900"/><ellipse cx="53.500" cy="55.500" rx="2.700" ry="1.900"/><ellipse cx="60.500" cy="55.500" rx="2.700" ry="1.900"/><ellipse cx="67.500" cy="55.500" rx="2.700" ry="1.900"/></g></svg><div class="fn">it_router.svg</div></div>
<div class="tile" style="left:485px;top:1px"><svg class="ico" width="80" height="80" viewBox="0 0 80 80" ><g id="dishg"><ellipse cx="66.200" cy="41.500" rx="9.600" ry="39" transform="rotate(11.600 66.200 41.500)" fill="none" stroke="#fff" stroke-width="3.2" stroke-linecap="round" stroke-linejoin="round"/><path d="M58.500 77.500L15 53" fill="none" stroke="#fff" stroke-width="3.2" stroke-linecap="round" stroke-linejoin="round"/><rect x="9.300" y="46.300" width="5.600" height="14.500" rx="1" fill="#fff"/><path d="M12 47.600h9.500v3.200h-6z" fill="#fff"/></g></svg><div class="fn">it_satellite_dish.svg</div></div>
<div class="tile" style="left:5px;top:181px"><svg class="ico" width="80" height="80" viewBox="0 0 80 80" ><use href="#dishg"/><path d="M1.500 39.500H26.500" fill="none" stroke="#fff" stroke-width="2.8" stroke-linecap="round" stroke-linejoin="round"/><path d="M6.5 5c-2.500 3 -2.500 5.500 0 8.200s2.500 5.500 0 8.200s-2.500 5.500 0 8.200s1.500 4 .3 5.0" fill="none" stroke="#fff" stroke-width="1.5" stroke-linecap="round" stroke-linejoin="round"/><path d="M14 2.5c-2.500 3 -2.500 5.500 0 8.200s2.500 5.500 0 8.200s-2.500 5.500 0 8.200s1.500 4 .3 7.5" fill="none" stroke="#fff" stroke-width="1.5" stroke-linecap="round" stroke-linejoin="round"/><path d="M21.5 5c-2.500 3 -2.500 5.500 0 8.200s2.500 5.500 0 8.200s-2.500 5.500 0 8.200s1.500 4 .3 5.0" fill="none" stroke="#fff" stroke-width="1.5" stroke-linecap="round" stroke-linejoin="round"/></svg><div class="fn">it_satellite_dish_he<br>ating.svg</div></div>
<div class="tile" style="left:165px;top:181px"><svg class="ico" width="80" height="80" viewBox="0 0 80 80" ><rect x="2.800" y="25.500" width="75" height="30.700" rx="3" fill="none" stroke="#fff" stroke-width="3.8" stroke-linecap="round" stroke-linejoin="round"/><path d="M9 31V50.500M71.500 31V50.500" fill="none" stroke="#fff" stroke-width="3" stroke-linecap="round" stroke-linejoin="round"/><rect x="39.200" y="32.400" width="28.800" height="7.800" rx="2.500" fill="#fff"/><rect x="40" y="43.200" width="27.200" height="2.200" rx="1.100" fill="none" stroke="#fff" stroke-width="1.7" stroke-linecap="round" stroke-linejoin="round"/><rect x="40" y="47.300" width="27.200" height="2.200" rx="1.100" fill="none" stroke="#fff" stroke-width="1.7" stroke-linecap="round" stroke-linejoin="round"/><ellipse cx="32.700" cy="38.800" rx="1.500" ry="2" fill="none" stroke="#fff" stroke-width="1.1" stroke-linecap="round" stroke-linejoin="round"/><circle cx="32.700" cy="43.700" r="1.300" fill="#fff"/><circle cx="32.700" cy="48.300" r="1.300" fill="#fff"/></svg><div class="fn">it_server.svg</div></div>
<div class="tile" style="left:325px;top:181px"><svg class="ico" width="80" height="80" viewBox="0 0 80 80" ><rect x="17.200" y="1.700" width="45" height="78.300" rx="3.500" fill="#fff"/><rect x="21" y="18.200" width="37.700" height="46.500" fill="#808080"/><rect x="31.900" y="9.300" width="17.200" height="1.500" fill="#808080"/><rect x="38" y="68.800" width="4.600" height="5" rx="1" fill="#808080"/></svg><div class="fn">it_smartphone.svg</div></div>
<div class="tile" style="left:485px;top:181px"><svg class="ico" width="80" height="80" viewBox="0 0 80 80" ><path d="M2.500 12.500C25 7.500 55 7.500 78 12.500V27.500C78 29 77.500 29.500 76 29.500H62C60 29.500 59 28.500 58 26.500C56.500 23 55.500 21.300 52.500 21.300H28C25 21.300 24 23 22.500 26.500C21.500 28.500 20.500 29.500 18.500 29.500H4.500C3 29.500 2.500 29 2.500 27.500Z" fill="none" stroke="#fff" stroke-width="3.2" stroke-linecap="round" stroke-linejoin="round"/><rect x="17.200" y="36.600" width="47" height="36.400" rx="2" fill="none" stroke="#fff" stroke-width="3.4" stroke-linecap="round" stroke-linejoin="round"/><path d="M28.500 36V31.500c0 -1.500 .5 -2 2 -2h20c1.500 0 2 .5 2 2V36" fill="none" stroke="#fff" stroke-width="3" stroke-linecap="round" stroke-linejoin="round"/><rect x="25" y="42.600" width="31" height="24.800" rx="2" fill="#fff"/><g fill="#808080"><rect x="29" y="46.3" width="4.800" height="3.200"/><rect x="29" y="53.4" width="4.800" height="3.200"/><rect x="29" y="60.5" width="4.800" height="3.200"/><rect x="38.1" y="46.3" width="4.800" height="3.200"/><rect x="38.1" y="53.4" width="4.800" height="3.200"/><rect x="38.1" y="60.5" width="4.800" height="3.200"/><rect x="47.2" y="46.3" width="4.800" height="3.200"/><rect x="47.2" y="53.4" width="4.800" height="3.200"/><rect x="47.2" y="60.5" width="4.800" height="3.200"/></g></svg><div class="fn">it_telephone.svg</div></div>
<div class="tile" style="left:5px;top:361px"><svg class="ico" width="80" height="80" viewBox="0 0 80 80" ><rect x="1.100" y="9.900" width="78.600" height="53.700" rx="4" fill="#fff"/><rect x="5.200" y="14.500" width="70.800" height="40.500" fill="#808080"/><rect x="36.300" y="63" width="7.900" height="6" fill="#fff"/><rect x="13.700" y="68.200" width="53.300" height="3.900" rx="1.900" fill="#fff"/></svg><div class="fn">it_television.svg</div></div>
<div class="tile" style="left:165px;top:361px"><svg class="ico" width="80" height="80" viewBox="0 0 80 80" ><g id="upsg"><rect x="3.200" y="17" width="41.400" height="61.500" rx="2.200" fill="none" stroke="#fff" stroke-width="3.6" stroke-linecap="round" stroke-linejoin="round"/><path d="M9.200 23.200H38.200M9.200 29.400H38.200M9.200 35.500H38.200" fill="none" stroke="#fff" stroke-width="3.3" stroke-linecap="round" stroke-linejoin="round"/><rect x="7.500" y="43.100" width="32.400" height="31.100" rx="3" fill="#fff"/><rect x="12" y="41" width="4.600" height="4" rx="1" fill="#fff"/><rect x="30.900" y="41" width="4.200" height="4" rx="1" fill="#fff"/><path d="M28 47.200L19 56.400L21.300 58.200L18.600 68.100L28 58.600L25.500 56.600L29.200 48Z" fill="#808080" stroke="#808080" stroke-width=".6" stroke-linejoin="round"/><path d="M46.400 40.200C51 40.200 53.600 43 52.500 48.500L50.300 60C49 67 53 70 59.500 70" fill="none" stroke="#fff" stroke-width="3.1" stroke-linecap="round" stroke-linejoin="round"/><path d="M70.300 63.600C62.500 64.500 59.800 68 59.800 71C59.800 74 62.500 77.700 70.300 78.600Z" fill="none" stroke="#fff" stroke-width="3" stroke-linecap="round" stroke-linejoin="round"/><path d="M71 66.300H77.600M71 75.800H77.600" fill="none" stroke="#fff" stroke-width="3.3" stroke-linecap="round" stroke-linejoin="round"/><rect x="67.300" y="62.300" width="4.300" height="17.400" rx="1" fill="#fff"/></g></svg><div class="fn">it_ups.svg</div></div>
<div class="tile" style="left:325px;top:361px"><svg class="ico" width="80" height="80" viewBox="0 0 80 80" ><use href="#upsg"/><path d="M67.800 3L57.200 22H78.400Z" fill="none" stroke="#fff" stroke-width="2" stroke-linecap="round" stroke-linejoin="round"/><path d="M67.800 8.500v8" stroke="#fff" stroke-width="1.500" fill="none"/><circle cx="67.800" cy="18.900" r=".9" fill="#fff"/></svg><div class="fn">it_ups_attention.sv<br>g</div></div>
<div class="tile" style="left:485px;top:361px"><svg class="ico" width="80" height="80" viewBox="0 0 80 80" ><use href="#upsg"/><rect x="59.600" y="5.800" width="19" height="34" rx="2" fill="none" stroke="#fff" stroke-width="2.4" stroke-linecap="round" stroke-linejoin="round"/><rect x="65.400" y="1.600" width="7.400" height="4" rx="1" fill="#fff"/><path d="M62.200 37.500H75.800V30.500L62.200 34Z" fill="#fff"/></svg><div class="fn">it_ups_battery_emp<br>ty.svg</div></div>
<div class="tile" style="left:5px;top:541px"><svg class="ico" width="80" height="80" viewBox="0 0 80 80" ><use href="#upsg"/><rect x="59.600" y="5.800" width="19" height="34" rx="2" fill="none" stroke="#fff" stroke-width="2.4" stroke-linecap="round" stroke-linejoin="round"/><rect x="65.400" y="1.600" width="7.400" height="4" rx="1" fill="#fff"/><path d="M62.200 37.800H75.800V30.800L62.200 34.600Z" fill="#fff"/><path d="M75 9.300L64.200 22.600L68.800 21.600L63.800 31.300L75.800 17.800L71.200 18.800Z" fill="#fff"/></svg><div class="fn">it_ups_charging.svg</div></div>
<div class="tile" style="left:165px;top:541px"><svg class="ico" width="80" height="80" viewBox="0 0 80 80" ><use href="#upsg"/><rect x="59.600" y="5.800" width="19" height="34" rx="2" fill="none" stroke="#fff" stroke-width="2.4" stroke-linecap="round" stroke-linejoin="round"/><rect x="65.400" y="1.600" width="7.400" height="4" rx="1" fill="#fff"/><path d="M62 8.300H76V11.300L62 16.300ZM62 18.300L76 13.300V18.300L62 23.300ZM62 25.300L76 20.300V25.300L62 30.300ZM62 32.300L76 27.300V37.500H62Z" fill="#fff"/></svg><div class="fn">it_ups_battery_full.svg</div></div>
<div class="tile" style="left:325px;top:541px"><svg class="ico" width="80" height="80" viewBox="0 0 80 80" ><use href="#upsg"/><path d="M63.500 5.800H60.600a4 4 0 0 0 -4 4V22.600a4 4 0 0 0 4 4H74.300a4 4 0 0 0 4 -4V9.800a4 4 0 0 0 -4 -4H71.500" fill="none" stroke="#fff" stroke-width="2" stroke-linecap="round" stroke-linejoin="round"/><path d="M67.500 2.500V17" fill="none" stroke="#fff" stroke-width="2" stroke-linecap="round" stroke-linejoin="round"/></svg><div class="fn">it_ups_power.svg</div></div>
<div class="tile" style="left:485px;top:541px"><svg class="ico" width="80" height="80" viewBox="0 0 80 80" ><rect x="35.900" y="28.800" width="8.800" height="8" rx="2" fill="none" stroke="#fff" stroke-width="3" stroke-linecap="round" stroke-linejoin="round"/><path d="M40.300 39V79" fill="none" stroke="#fff" stroke-width="3.4" stroke-linecap="round" stroke-linejoin="round"/><path d="M28.54 25.59A13.8 13.8 0 0 0 28.54 40.01M52.06 25.59A13.8 13.8 0 0 1 52.06 40.01" fill="none" stroke="#fff" stroke-width="3.2" stroke-linecap="round" stroke-linejoin="round"/><path d="M22.96 18.78A22.3 22.3 0 0 0 22.96 46.82M57.64 18.78A22.3 22.3 0 0 1 57.64 46.82" fill="none" stroke="#fff" stroke-width="3.2" stroke-linecap="round" stroke-linejoin="round"/><path d="M16.74 13.75A30.3 30.3 0 0 0 16.74 51.85M63.86 13.75A30.3 30.3 0 0 1 63.86 51.85" fill="none" stroke="#fff" stroke-width="3.2" stroke-linecap="round" stroke-linejoin="round"/><path d="M10.52 8.72A38.3 38.3 0 0 0 10.52 56.88M70.08 8.72A38.3 38.3 0 0 1 70.08 56.88" fill="none" stroke="#fff" stroke-width="3.2" stroke-linecap="round" stroke-linejoin="round"/></svg><div class="fn">it_wifi.svg</div></div>
</div>
<div class="btn dbt" style="left:988px">Auswählen</div>
<div class="btn dbt" style="left:1196px">Abbrechen</div>
</div>
</body>
</html>
